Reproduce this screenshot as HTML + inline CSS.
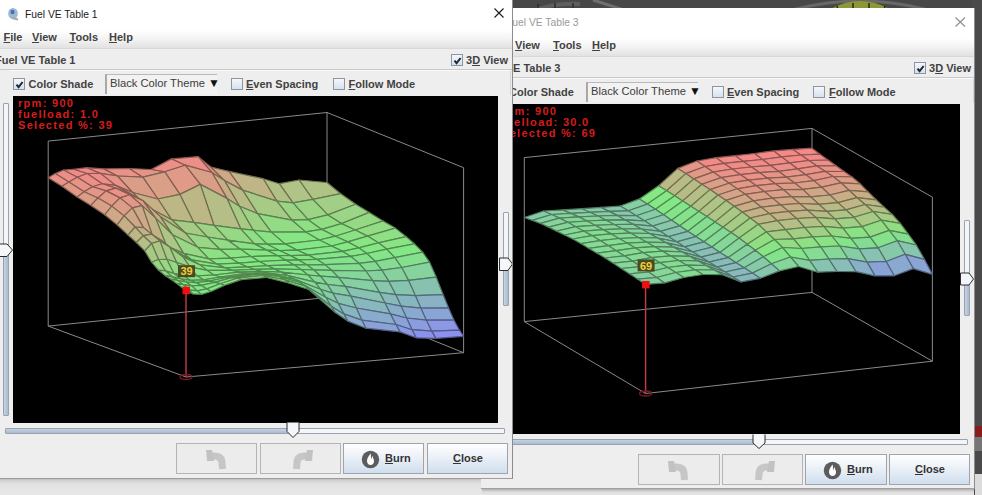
<!DOCTYPE html>
<html><head><meta charset="utf-8">
<style>
*{margin:0;padding:0;box-sizing:border-box}
html,body{width:982px;height:495px;overflow:hidden;background:#e6e6e6;font-family:"Liberation Sans",sans-serif}
.abs{position:absolute}
.win{position:absolute;background:#eeeeee;overflow:hidden}
.title{position:absolute;left:0;right:0;top:0;height:30px;background:#ffffff}
.menubar{position:absolute;left:0;right:0;top:30px;height:19px;background:linear-gradient(#ffffff 0%,#f6f6f6 40%,#e2e2e2 100%);border-bottom:1px solid #d8d8d8}
.mi{position:absolute;top:1px;font-size:11px;font-weight:700;color:#424242;white-space:nowrap}
.u{text-decoration:underline;text-underline-offset:1px}
.row{position:absolute;left:0;right:0;top:49px;height:21px;background:#eeeeee;border-bottom:1px solid #c9c9c9}
.lbl{position:absolute;font-size:11px;font-weight:700;color:#424242;white-space:nowrap}
.tb{position:absolute;top:70px;height:25px;background:#eeeeee;border-top:1px solid #fafafa;border-right:1px solid #d6d6d6}
.cb{position:absolute;width:12px;height:12px;border:1px solid #8a96a4;background:linear-gradient(#f4f7fb,#d7e1ec)}
.cb svg{position:absolute;left:1px;top:1px}
.combo{position:absolute;height:20px;border-left:2px solid #a8a8a8;border-top:1px solid #b9b9b9;background:#f2f2f2;font-size:11.2px;color:#3c3c3c;white-space:nowrap;padding-left:3px;line-height:17px}
.plot{position:absolute;background:#000;overflow:hidden}
.plot svg{position:absolute;left:0;top:0}
.txt{position:absolute;font-size:11px;font-weight:700;color:#d81c1c;letter-spacing:1.3px;line-height:11px;white-space:nowrap}
.vtrack{position:absolute;width:6px;border:1px solid #9aa3ad;background:#f3f5f8;border-radius:1px}
.vfill{position:absolute;left:0;right:0;bottom:0;background:linear-gradient(90deg,#c5d2e2,#a9bbd2)}
.htrack{position:absolute;height:6px;border:1px solid #9aa3ad;background:#f3f5f8;border-radius:1px}
.hfill{position:absolute;left:0;top:0;bottom:0;background:linear-gradient(#c5d2e2,#a9bbd2)}
.btn{position:absolute;border:1px solid #9ea4aa;background:linear-gradient(#fdfeff 0%,#f0f4f9 35%,#cfdeee 100%);font-size:11px;font-weight:700;color:#333;white-space:nowrap;text-align:center}
.btnd{position:absolute;border:1px solid #b4b4b4;background:#ececec}
</style></head><body>

<!-- background app -->
<div class="abs" style="left:480px;top:0;width:502px;height:12px;background:#474747"></div>
<div class="abs" style="left:972px;top:0;width:10px;height:495px;background:#4a4a4a"></div>
<div class="abs" style="left:975px;top:426px;width:7px;height:11px;background:#8a1c1c"></div>
<div class="abs" style="left:975px;top:437px;width:7px;height:14px;background:#767676"></div>
<div class="abs" style="left:975px;top:474px;width:7px;height:21px;background:#dcdcdc"></div>
<svg class="abs" style="left:480px;top:0" width="502" height="12">
  <path d="M305,12 Q380,-10 455,12" stroke="#686868" stroke-width="3" fill="none"/>
  <path d="M352,12 Q380,-3 408,12" stroke="#8e9636" stroke-width="7" fill="none"/>
  <path d="M357,6 L358,10 M373,3 L373,9 M389,3 L389,9 M405,6 L404,10" stroke="#2a2a10" stroke-width="1.5"/>
  <path d="M50,12 Q75,2 100,4" stroke="#5e5e5e" stroke-width="4" fill="none"/>
  <path d="M58,4 L58,11 M75,3 L75,10 M93,3 L93,10" stroke="#2e2e2e" stroke-width="1.5"/>
  <path d="M113,0 L147,11" stroke="#6e6e6e" stroke-width="3"/>
</svg>
<div class="abs" style="left:0;top:478px;width:482px;height:17px;background:linear-gradient(#a8a8a8 0px,#cfcfcf 2px,#e2e2e2 6px,#e8e8e8 100%)"></div>
<div class="abs" style="left:482px;top:489px;width:492px;height:6px;background:linear-gradient(#b0b0b0 0px,#dedede 3px,#e6e6e6 100%)"></div>

<!-- ============ WINDOW 2 ============ -->
<div class="win" style="left:481px;top:8px;width:494px;height:481px;border-right:1px solid #8c8c8c;border-bottom:1px solid #a0a0a0">
  <div class="title"><span class="abs" style="left:25px;top:9px;font-size:10.3px;color:#9a9a9a;white-space:nowrap">Fuel VE Table 3</span>
    <svg class="abs" style="left:474px;top:9px" width="11" height="10"><path d="M0.5,0.5 L10,9.5 M10,0.5 L0.5,9.5" stroke="#8e8e8e" stroke-width="1.1"/></svg>
  </div>
  <div class="menubar">
    <span class="mi" style="left:3px"><span class="u">F</span>ile</span>
    <span class="mi" style="left:34px"><span class="u">V</span>iew</span>
    <span class="mi" style="left:72px"><span class="u">T</span>ools</span>
    <span class="mi" style="left:111px"><span class="u">H</span>elp</span>
  </div>
  <div class="row">
    <span class="lbl" style="left:-1px;top:5px">Fuel VE Table 3</span>
    <div class="cb" style="left:433px;top:5px"><svg width="10" height="10"><path d="M1.5,4.6 L3.6,7.2 L7.6,2.0" stroke="#1c2838" stroke-width="2" fill="none"/></svg></div>
    <span class="lbl" style="left:448px;top:5px">3<span class="u">D</span> View</span>
  </div>
  <div class="tb" style="left:10px;width:483px">
    <div class="cb" style="left:2px;top:7px"><svg width="10" height="10"><path d="M1.5,4.6 L3.6,7.2 L7.6,2.0" stroke="#1c2838" stroke-width="2" fill="none"/></svg></div>
    <span class="lbl" style="left:18px;top:7px">Color Shade</span>
    <div class="combo" style="left:95px;top:3px;width:112px">Black Color Theme <span style="font-size:12px;color:#111;position:relative;top:0px">&#9660;</span></div>
    <div class="cb" style="left:221px;top:7px"></div>
    <span class="lbl" style="left:236px;top:7px"><span class="u">E</span>ven Spacing</span>
    <div class="cb" style="left:322px;top:7px"></div>
    <span class="lbl" style="left:338px;top:7px"><span class="u">F</span>ollow Mode</span>
  </div>
  <div class="plot" style="left:15px;top:96px;width:464px;height:330px">
    <svg width="464" height="330"><g transform="translate(-496,-104)"><line x1="524.3" y1="321.6" x2="524.3" y2="157.6" stroke="#8a8a8a" stroke-width="1"/>
<line x1="812.0" y1="292.4" x2="812.0" y2="128.4" stroke="#8a8a8a" stroke-width="1"/>
<line x1="932.4" y1="361.2" x2="932.4" y2="197.2" stroke="#8a8a8a" stroke-width="1"/>
<line x1="524.3" y1="157.6" x2="812.0" y2="128.4" stroke="#8a8a8a" stroke-width="1"/>
<line x1="812.0" y1="128.4" x2="932.4" y2="197.2" stroke="#8a8a8a" stroke-width="1"/>
<line x1="524.3" y1="321.6" x2="645.6" y2="393.5" stroke="#8a8a8a" stroke-width="1"/>
<line x1="645.6" y1="393.5" x2="932.4" y2="361.2" stroke="#8a8a8a" stroke-width="1"/>
<line x1="524.3" y1="321.6" x2="812.0" y2="292.4" stroke="#8a8a8a" stroke-width="1"/>
<line x1="812.0" y1="292.4" x2="932.4" y2="361.2" stroke="#8a8a8a" stroke-width="1"/><polygon points="800.9,155.0 820.0,154.2 812.0,148.2 792.8,149.4" fill="#f28a88" stroke="#915352" stroke-width="1.2" stroke-linejoin="round"/>
<polygon points="781.7,156.9 800.9,155.0 792.8,149.4 773.6,150.9" fill="#f28a88" stroke="#915352" stroke-width="1.2" stroke-linejoin="round"/>
<polygon points="762.5,159.5 781.7,156.9 773.6,150.9 754.5,153.5" fill="#f28a88" stroke="#915352" stroke-width="1.2" stroke-linejoin="round"/>
<polygon points="808.9,160.5 828.1,160.0 820.0,154.2 800.9,155.0" fill="#ef8c88" stroke="#905452" stroke-width="1.2" stroke-linejoin="round"/>
<polygon points="743.3,161.4 762.5,159.5 754.5,153.5 735.3,155.7" fill="#f28a88" stroke="#915352" stroke-width="1.2" stroke-linejoin="round"/>
<polygon points="789.7,162.9 808.9,160.5 800.9,155.0 781.7,156.9" fill="#f28a88" stroke="#915352" stroke-width="1.2" stroke-linejoin="round"/>
<polygon points="724.1,163.4 743.3,161.4 735.3,155.7 716.1,157.7" fill="#f28a88" stroke="#915352" stroke-width="1.2" stroke-linejoin="round"/>
<polygon points="770.5,165.4 789.7,162.9 781.7,156.9 762.5,159.5" fill="#f08c88" stroke="#905452" stroke-width="1.2" stroke-linejoin="round"/>
<polygon points="816.9,165.9 836.1,165.8 828.1,160.0 808.9,160.5" fill="#eb9088" stroke="#8d5651" stroke-width="1.2" stroke-linejoin="round"/>
<polygon points="705.0,166.5 724.1,163.4 716.1,157.7 696.9,161.0" fill="#f18b88" stroke="#915352" stroke-width="1.2" stroke-linejoin="round"/>
<polygon points="751.4,167.0 770.5,165.4 762.5,159.5 743.3,161.4" fill="#ef8c88" stroke="#905452" stroke-width="1.2" stroke-linejoin="round"/>
<polygon points="797.7,168.9 816.9,165.9 808.9,160.5 789.7,162.9" fill="#ed8e88" stroke="#8e5551" stroke-width="1.2" stroke-linejoin="round"/>
<polygon points="685.8,173.6 705.0,166.5 696.9,161.0 677.7,168.4" fill="#e49687" stroke="#895a51" stroke-width="1.2" stroke-linejoin="round"/>
<polygon points="732.2,169.0 751.4,167.0 743.3,161.4 724.1,163.4" fill="#f08c88" stroke="#905452" stroke-width="1.2" stroke-linejoin="round"/>
<polygon points="778.6,171.3 797.7,168.9 789.7,162.9 770.5,165.4" fill="#eb9088" stroke="#8d5751" stroke-width="1.2" stroke-linejoin="round"/>
<polygon points="824.9,171.3 844.1,171.5 836.1,165.8 816.9,165.9" fill="#e79388" stroke="#8b5851" stroke-width="1.2" stroke-linejoin="round"/>
<polygon points="666.6,190.8 685.8,173.6 677.7,168.4 658.6,185.8" fill="#bbb986" stroke="#706f50" stroke-width="1.2" stroke-linejoin="round"/>
<polygon points="713.0,172.1 732.2,169.0 724.1,163.4 705.0,166.5" fill="#ed8e88" stroke="#8e5552" stroke-width="1.2" stroke-linejoin="round"/>
<polygon points="759.4,172.6 778.6,171.3 770.5,165.4 751.4,167.0" fill="#eb9088" stroke="#8d5651" stroke-width="1.2" stroke-linejoin="round"/>
<polygon points="805.8,174.7 824.9,171.3 816.9,165.9 797.7,168.9" fill="#e99288" stroke="#8c5751" stroke-width="1.2" stroke-linejoin="round"/>
<polygon points="647.4,204.1 666.6,190.8 658.6,185.8 639.4,198.9" fill="#86e784" stroke="#508a4f" stroke-width="1.2" stroke-linejoin="round"/>
<polygon points="693.8,178.9 713.0,172.1 705.0,166.5 685.8,173.6" fill="#e19887" stroke="#875b51" stroke-width="1.2" stroke-linejoin="round"/>
<polygon points="740.2,174.6 759.4,172.6 751.4,167.0 732.2,169.0" fill="#ec8f88" stroke="#8e5651" stroke-width="1.2" stroke-linejoin="round"/>
<polygon points="786.6,177.2 805.8,174.7 797.7,168.9 778.6,171.3" fill="#e69588" stroke="#8a5951" stroke-width="1.2" stroke-linejoin="round"/>
<polygon points="833.0,176.5 852.1,177.0 844.1,171.5 824.9,171.3" fill="#e49687" stroke="#895a51" stroke-width="1.2" stroke-linejoin="round"/>
<polygon points="628.3,210.8 647.4,204.1 639.4,198.9 620.2,206.0" fill="#86cea3" stroke="#517c62" stroke-width="1.2" stroke-linejoin="round"/>
<polygon points="674.7,195.8 693.8,178.9 685.8,173.6 666.6,190.8" fill="#b9bb86" stroke="#6f7050" stroke-width="1.2" stroke-linejoin="round"/>
<polygon points="721.1,177.6 740.2,174.6 732.2,169.0 713.0,172.1" fill="#ea9188" stroke="#8c5751" stroke-width="1.2" stroke-linejoin="round"/>
<polygon points="767.5,178.2 786.6,177.2 778.6,171.3 759.4,172.6" fill="#e69488" stroke="#8a5951" stroke-width="1.2" stroke-linejoin="round"/>
<polygon points="813.8,180.6 833.0,176.5 824.9,171.3 805.8,174.7" fill="#e59588" stroke="#895951" stroke-width="1.2" stroke-linejoin="round"/>
<polygon points="609.1,211.4 628.3,210.8 620.2,206.0 601.0,207.4" fill="#87c7ab" stroke="#517867" stroke-width="1.2" stroke-linejoin="round"/>
<polygon points="655.5,209.3 674.7,195.8 666.6,190.8 647.4,204.1" fill="#84e884" stroke="#4f8b4f" stroke-width="1.2" stroke-linejoin="round"/>
<polygon points="701.9,184.3 721.1,177.6 713.0,172.1 693.8,178.9" fill="#de9b87" stroke="#855d51" stroke-width="1.2" stroke-linejoin="round"/>
<polygon points="748.3,180.1 767.5,178.2 759.4,172.6 740.2,174.6" fill="#e89288" stroke="#8b5851" stroke-width="1.2" stroke-linejoin="round"/>
<polygon points="794.7,183.0 813.8,180.6 805.8,174.7 786.6,177.2" fill="#e19987" stroke="#875c51" stroke-width="1.2" stroke-linejoin="round"/>
<polygon points="841.0,182.8 860.2,183.8 852.1,177.0 833.0,176.5" fill="#de9b87" stroke="#855d51" stroke-width="1.2" stroke-linejoin="round"/>
<polygon points="589.9,212.3 609.1,211.4 601.0,207.4 581.8,208.7" fill="#87caa7" stroke="#517964" stroke-width="1.2" stroke-linejoin="round"/>
<polygon points="636.3,215.7 655.5,209.3 647.4,204.1 628.3,210.8" fill="#86cda4" stroke="#517b63" stroke-width="1.2" stroke-linejoin="round"/>
<polygon points="682.7,200.9 701.9,184.3 693.8,178.9 674.7,195.8" fill="#b7bc86" stroke="#6e7150" stroke-width="1.2" stroke-linejoin="round"/>
<polygon points="729.1,183.2 748.3,180.1 740.2,174.6 721.1,177.6" fill="#e69488" stroke="#8a5951" stroke-width="1.2" stroke-linejoin="round"/>
<polygon points="775.5,183.7 794.7,183.0 786.6,177.2 767.5,178.2" fill="#e29887" stroke="#885b51" stroke-width="1.2" stroke-linejoin="round"/>
<polygon points="821.8,187.2 841.0,182.8 833.0,176.5 813.8,180.6" fill="#df9a87" stroke="#865c51" stroke-width="1.2" stroke-linejoin="round"/>
<polygon points="570.7,213.4 589.9,212.3 581.8,208.7 562.7,209.9" fill="#86cda4" stroke="#517b62" stroke-width="1.2" stroke-linejoin="round"/>
<polygon points="617.2,215.4 636.3,215.7 628.3,210.8 609.1,211.4" fill="#87c8aa" stroke="#517866" stroke-width="1.2" stroke-linejoin="round"/>
<polygon points="663.6,214.8 682.7,200.9 674.7,195.8 655.5,209.3" fill="#84e686" stroke="#4f8a50" stroke-width="1.2" stroke-linejoin="round"/>
<polygon points="710.0,189.6 729.1,183.2 721.1,177.6 701.9,184.3" fill="#db9e87" stroke="#835f51" stroke-width="1.2" stroke-linejoin="round"/>
<polygon points="756.3,185.7 775.5,183.7 767.5,178.2 748.3,180.1" fill="#e59688" stroke="#895a51" stroke-width="1.2" stroke-linejoin="round"/>
<polygon points="802.7,189.4 821.8,187.2 813.8,180.6 794.7,183.0" fill="#db9e87" stroke="#835f51" stroke-width="1.2" stroke-linejoin="round"/>
<polygon points="849.0,190.3 868.2,191.9 860.2,183.8 841.0,182.8" fill="#d4a487" stroke="#7f6251" stroke-width="1.2" stroke-linejoin="round"/>
<polygon points="551.6,214.5 570.7,213.4 562.7,209.9 543.5,211.0" fill="#86d0a1" stroke="#507d60" stroke-width="1.2" stroke-linejoin="round"/>
<polygon points="598.0,216.0 617.2,215.4 609.1,211.4 589.9,212.3" fill="#86cda4" stroke="#517b62" stroke-width="1.2" stroke-linejoin="round"/>
<polygon points="644.4,220.8 663.6,214.8 655.5,209.3 636.3,215.7" fill="#86cca6" stroke="#517a64" stroke-width="1.2" stroke-linejoin="round"/>
<polygon points="690.8,206.2 710.0,189.6 701.9,184.3 682.7,200.9" fill="#b5be86" stroke="#6c7250" stroke-width="1.2" stroke-linejoin="round"/>
<polygon points="737.2,188.8 756.3,185.7 748.3,180.1 729.1,183.2" fill="#e39787" stroke="#885b51" stroke-width="1.2" stroke-linejoin="round"/>
<polygon points="783.5,189.7 802.7,189.4 794.7,183.0 775.5,183.7" fill="#dd9c87" stroke="#855e51" stroke-width="1.2" stroke-linejoin="round"/>
<polygon points="829.9,195.0 849.0,190.3 841.0,182.8 821.8,187.2" fill="#d6a287" stroke="#806151" stroke-width="1.2" stroke-linejoin="round"/>
<polygon points="532.4,220.4 551.6,214.5 543.5,211.0 524.3,217.5" fill="#87caa7" stroke="#517964" stroke-width="1.2" stroke-linejoin="round"/>
<polygon points="578.8,216.9 598.0,216.0 589.9,212.3 570.7,213.4" fill="#86d19f" stroke="#507e60" stroke-width="1.2" stroke-linejoin="round"/>
<polygon points="625.2,219.9 644.4,220.8 636.3,215.7 617.2,215.4" fill="#87c9a9" stroke="#517866" stroke-width="1.2" stroke-linejoin="round"/>
<polygon points="671.6,220.3 690.8,206.2 682.7,200.9 663.6,214.8" fill="#84e489" stroke="#4f8952" stroke-width="1.2" stroke-linejoin="round"/>
<polygon points="718.0,195.0 737.2,188.8 729.1,183.2 710.0,189.6" fill="#d8a087" stroke="#816051" stroke-width="1.2" stroke-linejoin="round"/>
<polygon points="764.4,191.5 783.5,189.7 775.5,183.7 756.3,185.7" fill="#e09987" stroke="#875c51" stroke-width="1.2" stroke-linejoin="round"/>
<polygon points="810.7,196.9 829.9,195.0 821.8,187.2 802.7,189.4" fill="#d1a687" stroke="#7d6451" stroke-width="1.2" stroke-linejoin="round"/>
<polygon points="857.1,197.7 876.2,199.8 868.2,191.9 849.0,190.3" fill="#c7ae86" stroke="#786951" stroke-width="1.2" stroke-linejoin="round"/>
<polygon points="559.6,218.1 578.8,216.9 570.7,213.4 551.6,214.5" fill="#86d49c" stroke="#507f5d" stroke-width="1.2" stroke-linejoin="round"/>
<polygon points="606.1,220.2 625.2,219.9 617.2,215.4 598.0,216.0" fill="#86d0a1" stroke="#507d61" stroke-width="1.2" stroke-linejoin="round"/>
<polygon points="652.5,226.1 671.6,220.3 663.6,214.8 644.4,220.8" fill="#87c9a9" stroke="#517965" stroke-width="1.2" stroke-linejoin="round"/>
<polygon points="698.9,211.4 718.0,195.0 710.0,189.6 690.8,206.2" fill="#b2c186" stroke="#6b7450" stroke-width="1.2" stroke-linejoin="round"/>
<polygon points="745.2,194.3 764.4,191.5 756.3,185.7 737.2,188.8" fill="#df9a87" stroke="#865d51" stroke-width="1.2" stroke-linejoin="round"/>
<polygon points="791.6,196.6 810.7,196.9 802.7,189.4 783.5,189.7" fill="#d5a387" stroke="#806251" stroke-width="1.2" stroke-linejoin="round"/>
<polygon points="837.9,202.6 857.1,197.7 849.0,190.3 829.9,195.0" fill="#caac87" stroke="#796751" stroke-width="1.2" stroke-linejoin="round"/>
<polygon points="540.5,223.4 559.6,218.1 551.6,214.5 532.4,220.4" fill="#86d0a1" stroke="#507d61" stroke-width="1.2" stroke-linejoin="round"/>
<polygon points="586.9,221.0 606.1,220.2 598.0,216.0 578.8,216.9" fill="#86d49c" stroke="#507f5d" stroke-width="1.2" stroke-linejoin="round"/>
<polygon points="633.3,224.4 652.5,226.1 644.4,220.8 625.2,219.9" fill="#87c8aa" stroke="#517866" stroke-width="1.2" stroke-linejoin="round"/>
<polygon points="679.7,225.8 698.9,211.4 690.8,206.2 671.6,220.3" fill="#85e28b" stroke="#508854" stroke-width="1.2" stroke-linejoin="round"/>
<polygon points="726.1,200.4 745.2,194.3 737.2,188.8 718.0,195.0" fill="#d5a387" stroke="#806251" stroke-width="1.2" stroke-linejoin="round"/>
<polygon points="772.4,198.1 791.6,196.6 783.5,189.7 764.4,191.5" fill="#da9f87" stroke="#835f51" stroke-width="1.2" stroke-linejoin="round"/>
<polygon points="818.8,204.3 837.9,202.6 829.9,195.0 810.7,196.9" fill="#c5b186" stroke="#766a51" stroke-width="1.2" stroke-linejoin="round"/>
<polygon points="865.1,204.5 884.2,207.1 876.2,199.8 857.1,197.7" fill="#bcb886" stroke="#716e50" stroke-width="1.2" stroke-linejoin="round"/>
<polygon points="567.7,222.3 586.9,221.0 578.8,216.9 559.6,218.1" fill="#85d798" stroke="#50815b" stroke-width="1.2" stroke-linejoin="round"/>
<polygon points="614.1,224.5 633.3,224.4 625.2,219.9 606.1,220.2" fill="#86d19f" stroke="#507d60" stroke-width="1.2" stroke-linejoin="round"/>
<polygon points="660.5,231.4 679.7,225.8 671.6,220.3 652.5,226.1" fill="#87c7ab" stroke="#517767" stroke-width="1.2" stroke-linejoin="round"/>
<polygon points="706.9,216.6 726.1,200.4 718.0,195.0 698.9,211.4" fill="#b0c386" stroke="#697550" stroke-width="1.2" stroke-linejoin="round"/>
<polygon points="753.3,200.8 772.4,198.1 764.4,191.5 745.2,194.3" fill="#d99f87" stroke="#826051" stroke-width="1.2" stroke-linejoin="round"/>
<polygon points="799.6,203.5 818.8,204.3 810.7,196.9 791.6,196.6" fill="#caac87" stroke="#796751" stroke-width="1.2" stroke-linejoin="round"/>
<polygon points="846.0,209.9 865.1,204.5 857.1,197.7 837.9,202.6" fill="#bfb586" stroke="#736d50" stroke-width="1.2" stroke-linejoin="round"/>
<polygon points="548.6,227.1 567.7,222.3 559.6,218.1 540.5,223.4" fill="#86d39d" stroke="#507f5e" stroke-width="1.2" stroke-linejoin="round"/>
<polygon points="595.0,225.3 614.1,224.5 606.1,220.2 586.9,221.0" fill="#86d69a" stroke="#50805c" stroke-width="1.2" stroke-linejoin="round"/>
<polygon points="641.4,229.0 660.5,231.4 652.5,226.1 633.3,224.4" fill="#87c8ab" stroke="#517866" stroke-width="1.2" stroke-linejoin="round"/>
<polygon points="687.8,231.3 706.9,216.6 698.9,211.4 679.7,225.8" fill="#85e08e" stroke="#508655" stroke-width="1.2" stroke-linejoin="round"/>
<polygon points="734.1,206.3 753.3,200.8 745.2,194.3 726.1,200.4" fill="#d0a787" stroke="#7d6451" stroke-width="1.2" stroke-linejoin="round"/>
<polygon points="780.5,204.8 799.6,203.5 791.6,196.6 772.4,198.1" fill="#d1a687" stroke="#7d6451" stroke-width="1.2" stroke-linejoin="round"/>
<polygon points="826.8,211.4 846.0,209.9 837.9,202.6 818.8,204.3" fill="#baba86" stroke="#707050" stroke-width="1.2" stroke-linejoin="round"/>
<polygon points="873.1,211.5 892.3,214.4 884.2,207.1 865.1,204.5" fill="#b2c086" stroke="#6b7350" stroke-width="1.2" stroke-linejoin="round"/>
<polygon points="575.8,226.7 595.0,225.3 586.9,221.0 567.7,222.3" fill="#85d996" stroke="#50825a" stroke-width="1.2" stroke-linejoin="round"/>
<polygon points="622.2,228.8 641.4,229.0 633.3,224.4 614.1,224.5" fill="#86d29e" stroke="#507e5f" stroke-width="1.2" stroke-linejoin="round"/>
<polygon points="668.6,236.7 687.8,231.3 679.7,225.8 660.5,231.4" fill="#87c5ae" stroke="#517668" stroke-width="1.2" stroke-linejoin="round"/>
<polygon points="715.0,221.9 734.1,206.3 726.1,200.4 706.9,216.6" fill="#adc585" stroke="#687650" stroke-width="1.2" stroke-linejoin="round"/>
<polygon points="761.3,207.2 780.5,204.8 772.4,198.1 753.3,200.8" fill="#d1a687" stroke="#7e6451" stroke-width="1.2" stroke-linejoin="round"/>
<polygon points="807.7,210.2 826.8,211.4 818.8,204.3 799.6,203.5" fill="#c1b486" stroke="#746c51" stroke-width="1.2" stroke-linejoin="round"/>
<polygon points="854.0,217.3 873.1,211.5 865.1,204.5 846.0,209.9" fill="#b5be86" stroke="#6d7250" stroke-width="1.2" stroke-linejoin="round"/>
<polygon points="556.6,231.1 575.8,226.7 567.7,222.3 548.6,227.1" fill="#86d69a" stroke="#50805c" stroke-width="1.2" stroke-linejoin="round"/>
<polygon points="603.1,229.6 622.2,228.8 614.1,224.5 595.0,225.3" fill="#85d798" stroke="#50815b" stroke-width="1.2" stroke-linejoin="round"/>
<polygon points="649.4,233.5 668.6,236.7 660.5,231.4 641.4,229.0" fill="#87c7ab" stroke="#517867" stroke-width="1.2" stroke-linejoin="round"/>
<polygon points="695.8,236.6 715.0,221.9 706.9,216.6 687.8,231.3" fill="#85de90" stroke="#508557" stroke-width="1.2" stroke-linejoin="round"/>
<polygon points="742.2,212.1 761.3,207.2 753.3,200.8 734.1,206.3" fill="#caac87" stroke="#796751" stroke-width="1.2" stroke-linejoin="round"/>
<polygon points="788.5,211.4 807.7,210.2 799.6,203.5 780.5,204.8" fill="#c9ad86" stroke="#786851" stroke-width="1.2" stroke-linejoin="round"/>
<polygon points="834.8,218.9 854.0,217.3 846.0,209.9 826.8,211.4" fill="#afc386" stroke="#697550" stroke-width="1.2" stroke-linejoin="round"/>
<polygon points="881.2,220.2 900.3,223.4 892.3,214.4 873.1,211.5" fill="#a5cc85" stroke="#637a50" stroke-width="1.2" stroke-linejoin="round"/>
<polygon points="583.9,231.2 603.1,229.6 595.0,225.3 575.8,226.7" fill="#85da94" stroke="#508359" stroke-width="1.2" stroke-linejoin="round"/>
<polygon points="630.3,233.1 649.4,233.5 641.4,229.0 622.2,228.8" fill="#86d39d" stroke="#507f5e" stroke-width="1.2" stroke-linejoin="round"/>
<polygon points="676.7,241.8 695.8,236.6 687.8,231.3 668.6,236.7" fill="#87c3b0" stroke="#51756a" stroke-width="1.2" stroke-linejoin="round"/>
<polygon points="723.0,227.2 742.2,212.1 734.1,206.3 715.0,221.9" fill="#a9c885" stroke="#657850" stroke-width="1.2" stroke-linejoin="round"/>
<polygon points="769.4,213.6 788.5,211.4 780.5,204.8 761.3,207.2" fill="#caac87" stroke="#796751" stroke-width="1.2" stroke-linejoin="round"/>
<polygon points="815.7,217.4 834.8,218.9 826.8,211.4 807.7,210.2" fill="#b7bc86" stroke="#6e7150" stroke-width="1.2" stroke-linejoin="round"/>
<polygon points="862.0,226.6 881.2,220.2 873.1,211.5 854.0,217.3" fill="#a7ca85" stroke="#647950" stroke-width="1.2" stroke-linejoin="round"/>
<polygon points="564.7,235.0 583.9,231.2 575.8,226.7 556.6,231.1" fill="#85d898" stroke="#50815b" stroke-width="1.2" stroke-linejoin="round"/>
<polygon points="611.1,233.9 630.3,233.1 622.2,228.8 603.1,229.6" fill="#85d996" stroke="#50825a" stroke-width="1.2" stroke-linejoin="round"/>
<polygon points="657.5,238.0 676.7,241.8 668.6,236.7 649.4,233.5" fill="#87c7ac" stroke="#517767" stroke-width="1.2" stroke-linejoin="round"/>
<polygon points="703.9,241.8 723.0,227.2 715.0,221.9 695.8,236.6" fill="#85dc93" stroke="#508458" stroke-width="1.2" stroke-linejoin="round"/>
<polygon points="750.2,218.0 769.4,213.6 761.3,207.2 742.2,212.1" fill="#c4b186" stroke="#766a51" stroke-width="1.2" stroke-linejoin="round"/>
<polygon points="796.6,218.5 815.7,217.4 807.7,210.2 788.5,211.4" fill="#c0b586" stroke="#736d51" stroke-width="1.2" stroke-linejoin="round"/>
<polygon points="842.9,228.1 862.0,226.6 854.0,217.3 834.8,218.9" fill="#a0d085" stroke="#607d50" stroke-width="1.2" stroke-linejoin="round"/>
<polygon points="889.2,230.4 908.3,234.2 900.3,223.4 881.2,220.2" fill="#90dd84" stroke="#57854f" stroke-width="1.2" stroke-linejoin="round"/>
<polygon points="592.0,235.6 611.1,233.9 603.1,229.6 583.9,231.2" fill="#85dc93" stroke="#508458" stroke-width="1.2" stroke-linejoin="round"/>
<polygon points="638.4,237.6 657.5,238.0 649.4,233.5 630.3,233.1" fill="#86d49c" stroke="#507f5e" stroke-width="1.2" stroke-linejoin="round"/>
<polygon points="684.7,246.9 703.9,241.8 695.8,236.6 676.7,241.8" fill="#87c1b2" stroke="#51746b" stroke-width="1.2" stroke-linejoin="round"/>
<polygon points="731.1,232.5 750.2,218.0 742.2,212.1 723.0,227.2" fill="#a6cb85" stroke="#637a50" stroke-width="1.2" stroke-linejoin="round"/>
<polygon points="777.4,220.7 796.6,218.5 788.5,211.4 769.4,213.6" fill="#c1b386" stroke="#746c51" stroke-width="1.2" stroke-linejoin="round"/>
<polygon points="823.7,226.4 842.9,228.1 834.8,218.9 815.7,217.4" fill="#a9c985" stroke="#657850" stroke-width="1.2" stroke-linejoin="round"/>
<polygon points="870.1,237.1 889.2,230.4 881.2,220.2 862.0,226.6" fill="#93db85" stroke="#588450" stroke-width="1.2" stroke-linejoin="round"/>
<polygon points="572.8,239.0 592.0,235.6 583.9,231.2 564.7,235.0" fill="#85da95" stroke="#50835a" stroke-width="1.2" stroke-linejoin="round"/>
<polygon points="619.2,238.5 638.4,237.6 630.3,233.1 611.1,233.9" fill="#85da95" stroke="#508359" stroke-width="1.2" stroke-linejoin="round"/>
<polygon points="665.6,242.6 684.7,246.9 676.7,241.8 657.5,238.0" fill="#87c6ac" stroke="#517767" stroke-width="1.2" stroke-linejoin="round"/>
<polygon points="711.9,247.1 731.1,232.5 723.0,227.2 703.9,241.8" fill="#85da95" stroke="#508359" stroke-width="1.2" stroke-linejoin="round"/>
<polygon points="758.3,224.3 777.4,220.7 769.4,213.6 750.2,218.0" fill="#bdb786" stroke="#726e50" stroke-width="1.2" stroke-linejoin="round"/>
<polygon points="804.6,227.5 823.7,226.4 815.7,217.4 796.6,218.5" fill="#b2c186" stroke="#6b7450" stroke-width="1.2" stroke-linejoin="round"/>
<polygon points="850.9,238.3 870.1,237.1 862.0,226.6 842.9,228.1" fill="#8be284" stroke="#54874f" stroke-width="1.2" stroke-linejoin="round"/>
<polygon points="897.2,240.7 916.3,245.0 908.3,234.2 889.2,230.4" fill="#85de8f" stroke="#508556" stroke-width="1.2" stroke-linejoin="round"/>
<polygon points="600.1,240.6 619.2,238.5 611.1,233.9 592.0,235.6" fill="#85dc92" stroke="#508458" stroke-width="1.2" stroke-linejoin="round"/>
<polygon points="646.4,242.1 665.6,242.6 657.5,238.0 638.4,237.6" fill="#86d59b" stroke="#50805d" stroke-width="1.2" stroke-linejoin="round"/>
<polygon points="692.8,252.0 711.9,247.1 703.9,241.8 684.7,246.9" fill="#87c0b4" stroke="#51736c" stroke-width="1.2" stroke-linejoin="round"/>
<polygon points="739.1,238.1 758.3,224.3 750.2,218.0 731.1,232.5" fill="#a1cf85" stroke="#617c50" stroke-width="1.2" stroke-linejoin="round"/>
<polygon points="785.5,229.7 804.6,227.5 796.6,218.5 777.4,220.7" fill="#b4bf86" stroke="#6c7350" stroke-width="1.2" stroke-linejoin="round"/>
<polygon points="831.8,236.0 850.9,238.3 842.9,228.1 823.7,226.4" fill="#95d985" stroke="#5a8250" stroke-width="1.2" stroke-linejoin="round"/>
<polygon points="878.1,247.8 897.2,240.7 889.2,230.4 870.1,237.1" fill="#85e18c" stroke="#508754" stroke-width="1.2" stroke-linejoin="round"/>
<polygon points="580.9,243.6 600.1,240.6 592.0,235.6 572.8,239.0" fill="#85db94" stroke="#508359" stroke-width="1.2" stroke-linejoin="round"/>
<polygon points="627.3,243.2 646.4,242.1 638.4,237.6 619.2,238.5" fill="#85db94" stroke="#508359" stroke-width="1.2" stroke-linejoin="round"/>
<polygon points="673.7,247.2 692.8,252.0 684.7,246.9 665.6,242.6" fill="#87c6ad" stroke="#517768" stroke-width="1.2" stroke-linejoin="round"/>
<polygon points="720.0,252.4 739.1,238.1 731.1,232.5 711.9,247.1" fill="#85d898" stroke="#50815b" stroke-width="1.2" stroke-linejoin="round"/>
<polygon points="766.3,231.9 785.5,229.7 777.4,220.7 758.3,224.3" fill="#b2c186" stroke="#6b7450" stroke-width="1.2" stroke-linejoin="round"/>
<polygon points="812.7,236.8 831.8,236.0 823.7,226.4 804.6,227.5" fill="#a0d085" stroke="#607d50" stroke-width="1.2" stroke-linejoin="round"/>
<polygon points="859.0,248.8 878.1,247.8 870.1,237.1 850.9,238.3" fill="#85db94" stroke="#508359" stroke-width="1.2" stroke-linejoin="round"/>
<polygon points="905.2,254.3 924.4,259.3 916.3,245.0 897.2,240.7" fill="#87c5ae" stroke="#517668" stroke-width="1.2" stroke-linejoin="round"/>
<polygon points="608.1,245.6 627.3,243.2 619.2,238.5 600.1,240.6" fill="#85dc92" stroke="#508458" stroke-width="1.2" stroke-linejoin="round"/>
<polygon points="654.5,246.7 673.7,247.2 665.6,242.6 646.4,242.1" fill="#86d59a" stroke="#50805d" stroke-width="1.2" stroke-linejoin="round"/>
<polygon points="700.9,257.1 720.0,252.4 711.9,247.1 692.8,252.0" fill="#88beb6" stroke="#51726d" stroke-width="1.2" stroke-linejoin="round"/>
<polygon points="747.2,244.2 766.3,231.9 758.3,224.3 739.1,238.1" fill="#9ad585" stroke="#5d8050" stroke-width="1.2" stroke-linejoin="round"/>
<polygon points="793.5,238.8 812.7,236.8 804.6,227.5 785.5,229.7" fill="#a2ce85" stroke="#617c50" stroke-width="1.2" stroke-linejoin="round"/>
<polygon points="839.8,246.0 859.0,248.8 850.9,238.3 831.8,236.0" fill="#84e489" stroke="#4f8952" stroke-width="1.2" stroke-linejoin="round"/>
<polygon points="886.1,261.5 905.2,254.3 897.2,240.7 878.1,247.8" fill="#87c8aa" stroke="#517866" stroke-width="1.2" stroke-linejoin="round"/>
<polygon points="589.0,248.4 608.1,245.6 600.1,240.6 580.9,243.6" fill="#85da94" stroke="#508359" stroke-width="1.2" stroke-linejoin="round"/>
<polygon points="635.4,247.9 654.5,246.7 646.4,242.1 627.3,243.2" fill="#85db93" stroke="#508358" stroke-width="1.2" stroke-linejoin="round"/>
<polygon points="681.7,251.8 700.9,257.1 692.8,252.0 673.7,247.2" fill="#87c6ad" stroke="#517768" stroke-width="1.2" stroke-linejoin="round"/>
<polygon points="728.1,257.6 747.2,244.2 739.1,238.1 720.0,252.4" fill="#86d59b" stroke="#50805d" stroke-width="1.2" stroke-linejoin="round"/>
<polygon points="774.4,239.5 793.5,238.8 785.5,229.7 766.3,231.9" fill="#a3cd85" stroke="#627b50" stroke-width="1.2" stroke-linejoin="round"/>
<polygon points="820.7,246.8 839.8,246.0 831.8,236.0 812.7,236.8" fill="#8be284" stroke="#54874f" stroke-width="1.2" stroke-linejoin="round"/>
<polygon points="867.0,262.1 886.1,261.5 878.1,247.8 859.0,248.8" fill="#87c2b2" stroke="#51746b" stroke-width="1.2" stroke-linejoin="round"/>
<polygon points="913.3,268.6 932.4,274.4 924.4,259.3 905.2,254.3" fill="#8aa4d5" stroke="#536380" stroke-width="1.2" stroke-linejoin="round"/>
<polygon points="616.2,250.7 635.4,247.9 627.3,243.2 608.1,245.6" fill="#85dc93" stroke="#508458" stroke-width="1.2" stroke-linejoin="round"/>
<polygon points="662.6,251.2 681.7,251.8 673.7,247.2 654.5,246.7" fill="#86d69a" stroke="#50805c" stroke-width="1.2" stroke-linejoin="round"/>
<polygon points="708.9,262.1 728.1,257.6 720.0,252.4 700.9,257.1" fill="#88bdb8" stroke="#51716e" stroke-width="1.2" stroke-linejoin="round"/>
<polygon points="755.3,250.3 774.4,239.5 766.3,231.9 747.2,244.2" fill="#92dc84" stroke="#57844f" stroke-width="1.2" stroke-linejoin="round"/>
<polygon points="801.6,248.5 820.7,246.8 812.7,236.8 793.5,238.8" fill="#8fdf84" stroke="#56864f" stroke-width="1.2" stroke-linejoin="round"/>
<polygon points="847.9,258.7 867.0,262.1 859.0,248.8 839.8,246.0" fill="#86cda5" stroke="#517b63" stroke-width="1.2" stroke-linejoin="round"/>
<polygon points="894.2,275.8 913.3,268.6 905.2,254.3 886.1,261.5" fill="#8aa9d0" stroke="#53657d" stroke-width="1.2" stroke-linejoin="round"/>
<polygon points="597.1,253.2 616.2,250.7 608.1,245.6 589.0,248.4" fill="#85da95" stroke="#508359" stroke-width="1.2" stroke-linejoin="round"/>
<polygon points="643.4,252.7 662.6,251.2 654.5,246.7 635.4,247.9" fill="#85dc93" stroke="#508458" stroke-width="1.2" stroke-linejoin="round"/>
<polygon points="689.8,256.4 708.9,262.1 700.9,257.1 681.7,251.8" fill="#87c5ad" stroke="#517668" stroke-width="1.2" stroke-linejoin="round"/>
<polygon points="736.1,262.7 755.3,250.3 747.2,244.2 728.1,257.6" fill="#86d29f" stroke="#507e5f" stroke-width="1.2" stroke-linejoin="round"/>
<polygon points="782.5,247.5 801.6,248.5 793.5,238.8 774.4,239.5" fill="#94db85" stroke="#598350" stroke-width="1.2" stroke-linejoin="round"/>
<polygon points="828.8,259.0 847.9,258.7 839.8,246.0 820.7,246.8" fill="#85d897" stroke="#50825b" stroke-width="1.2" stroke-linejoin="round"/>
<polygon points="875.0,275.9 894.2,275.8 886.1,261.5 867.0,262.1" fill="#8aa3d6" stroke="#536281" stroke-width="1.2" stroke-linejoin="round"/>
<polygon points="624.3,255.8 643.4,252.7 635.4,247.9 616.2,250.7" fill="#85db93" stroke="#508458" stroke-width="1.2" stroke-linejoin="round"/>
<polygon points="670.7,255.9 689.8,256.4 681.7,251.8 662.6,251.2" fill="#86d699" stroke="#50815c" stroke-width="1.2" stroke-linejoin="round"/>
<polygon points="717.0,267.1 736.1,262.7 728.1,257.6 708.9,262.1" fill="#88bcb9" stroke="#52716f" stroke-width="1.2" stroke-linejoin="round"/>
<polygon points="763.3,256.7 782.5,247.5 774.4,239.5 755.3,250.3" fill="#88e484" stroke="#52894f" stroke-width="1.2" stroke-linejoin="round"/>
<polygon points="809.6,260.4 828.8,259.0 820.7,246.8 801.6,248.5" fill="#85dc93" stroke="#508458" stroke-width="1.2" stroke-linejoin="round"/>
<polygon points="855.9,271.6 875.0,275.9 867.0,262.1 847.9,258.7" fill="#89b0c7" stroke="#526a77" stroke-width="1.2" stroke-linejoin="round"/>
<polygon points="605.2,258.0 624.3,255.8 616.2,250.7 597.1,253.2" fill="#85d995" stroke="#50825a" stroke-width="1.2" stroke-linejoin="round"/>
<polygon points="651.5,257.6 670.7,255.9 662.6,251.2 643.4,252.7" fill="#85dc93" stroke="#508458" stroke-width="1.2" stroke-linejoin="round"/>
<polygon points="697.9,260.9 717.0,267.1 708.9,262.1 689.8,256.4" fill="#87c5ae" stroke="#517668" stroke-width="1.2" stroke-linejoin="round"/>
<polygon points="744.2,267.8 763.3,256.7 755.3,250.3 736.1,262.7" fill="#86cea3" stroke="#517c62" stroke-width="1.2" stroke-linejoin="round"/>
<polygon points="790.5,257.0 809.6,260.4 801.6,248.5 782.5,247.5" fill="#84e489" stroke="#4f8952" stroke-width="1.2" stroke-linejoin="round"/>
<polygon points="836.8,271.4 855.9,271.6 847.9,258.7 828.8,259.0" fill="#88beb7" stroke="#51726e" stroke-width="1.2" stroke-linejoin="round"/>
<polygon points="632.4,261.1 651.5,257.6 643.4,252.7 624.3,255.8" fill="#85db94" stroke="#508359" stroke-width="1.2" stroke-linejoin="round"/>
<polygon points="678.7,260.5 697.9,260.9 689.8,256.4 670.7,255.9" fill="#85d798" stroke="#50815b" stroke-width="1.2" stroke-linejoin="round"/>
<polygon points="725.1,272.0 744.2,267.8 736.1,262.7 717.0,267.1" fill="#88bbba" stroke="#527070" stroke-width="1.2" stroke-linejoin="round"/>
<polygon points="771.4,263.8 790.5,257.0 782.5,247.5 763.3,256.7" fill="#85e28c" stroke="#508754" stroke-width="1.2" stroke-linejoin="round"/>
<polygon points="817.7,272.2 836.8,271.4 828.8,259.0 809.6,260.4" fill="#87c3b0" stroke="#51756a" stroke-width="1.2" stroke-linejoin="round"/>
<polygon points="613.3,263.2 632.4,261.1 624.3,255.8 605.2,258.0" fill="#85d897" stroke="#50825a" stroke-width="1.2" stroke-linejoin="round"/>
<polygon points="659.6,262.6 678.7,260.5 670.7,255.9 651.5,257.6" fill="#85dc93" stroke="#508458" stroke-width="1.2" stroke-linejoin="round"/>
<polygon points="705.9,265.5 725.1,272.0 717.0,267.1 697.9,260.9" fill="#87c5ae" stroke="#517668" stroke-width="1.2" stroke-linejoin="round"/>
<polygon points="752.3,273.1 771.4,263.8 763.3,256.7 744.2,267.8" fill="#87caa8" stroke="#517965" stroke-width="1.2" stroke-linejoin="round"/>
<polygon points="798.6,266.5 817.7,272.2 809.6,260.4 790.5,257.0" fill="#86d0a1" stroke="#507d60" stroke-width="1.2" stroke-linejoin="round"/>
<polygon points="640.5,266.6 659.6,262.6 651.5,257.6 632.4,261.1" fill="#85d996" stroke="#50825a" stroke-width="1.2" stroke-linejoin="round"/>
<polygon points="686.8,265.2 705.9,265.5 697.9,260.9 678.7,260.5" fill="#85d798" stroke="#50815b" stroke-width="1.2" stroke-linejoin="round"/>
<polygon points="733.1,277.0 752.3,273.1 744.2,267.8 725.1,272.0" fill="#88b9bc" stroke="#526f71" stroke-width="1.2" stroke-linejoin="round"/>
<polygon points="779.4,270.9 798.6,266.5 790.5,257.0 771.4,263.8" fill="#86d59a" stroke="#50805d" stroke-width="1.2" stroke-linejoin="round"/>
<polygon points="621.3,268.5 640.5,266.6 632.4,261.1 613.3,263.2" fill="#86d799" stroke="#50815c" stroke-width="1.2" stroke-linejoin="round"/>
<polygon points="667.7,267.5 686.8,265.2 678.7,260.5 659.6,262.6" fill="#85db93" stroke="#508458" stroke-width="1.2" stroke-linejoin="round"/>
<polygon points="714.0,270.0 733.1,277.0 725.1,272.0 705.9,265.5" fill="#87c5ae" stroke="#517668" stroke-width="1.2" stroke-linejoin="round"/>
<polygon points="760.3,278.3 779.4,270.9 771.4,263.8 752.3,273.1" fill="#87c5ae" stroke="#517668" stroke-width="1.2" stroke-linejoin="round"/>
<polygon points="648.6,272.0 667.7,267.5 659.6,262.6 640.5,266.6" fill="#85d897" stroke="#50815b" stroke-width="1.2" stroke-linejoin="round"/>
<polygon points="694.9,269.8 714.0,270.0 705.9,265.5 686.8,265.2" fill="#85d897" stroke="#50825b" stroke-width="1.2" stroke-linejoin="round"/>
<polygon points="741.2,281.9 760.3,278.3 752.3,273.1 733.1,277.0" fill="#88b8bd" stroke="#526e72" stroke-width="1.2" stroke-linejoin="round"/>
<polygon points="629.4,273.8 648.6,272.0 640.5,266.6 621.3,268.5" fill="#86d59b" stroke="#50805d" stroke-width="1.2" stroke-linejoin="round"/>
<polygon points="675.8,272.5 694.9,269.8 686.8,265.2 667.7,267.5" fill="#85db93" stroke="#508458" stroke-width="1.2" stroke-linejoin="round"/>
<polygon points="722.1,274.6 741.2,281.9 733.1,277.0 714.0,270.0" fill="#87c5ae" stroke="#517668" stroke-width="1.2" stroke-linejoin="round"/>
<polygon points="656.6,277.5 675.8,272.5 667.7,267.5 648.6,272.0" fill="#86d699" stroke="#50815c" stroke-width="1.2" stroke-linejoin="round"/>
<polygon points="703.0,274.5 722.1,274.6 714.0,270.0 694.9,269.8" fill="#85d897" stroke="#50825a" stroke-width="1.2" stroke-linejoin="round"/>
<polygon points="637.5,279.1 656.6,277.5 648.6,272.0 629.4,273.8" fill="#86d39e" stroke="#507e5f" stroke-width="1.2" stroke-linejoin="round"/>
<polygon points="683.8,277.5 703.0,274.5 694.9,269.8 675.8,272.5" fill="#85db93" stroke="#508358" stroke-width="1.2" stroke-linejoin="round"/>
<polygon points="664.7,282.9 683.8,277.5 675.8,272.5 656.6,277.5" fill="#86d59b" stroke="#50805d" stroke-width="1.2" stroke-linejoin="round"/>
<polygon points="645.6,284.4 664.7,282.9 656.6,277.5 637.5,279.1" fill="#86d1a0" stroke="#507d60" stroke-width="1.2" stroke-linejoin="round"/><line x1="645.6" y1="284.4" x2="645.6" y2="393.5" stroke="#c83a4a" stroke-width="1.4"/><ellipse cx="645.6" cy="393.5" rx="6" ry="2.5" stroke="#7a1828" fill="none" stroke-width="1.3"/><rect x="642.1" y="280.9" width="7.5" height="7.5" fill="#ee1010"/><rect x="637.6" y="259.4" width="17" height="12" fill="#4a4a20"/><text x="646.1" y="269.6" fill="#f0d040" font-family="Liberation Sans" font-weight="700" font-size="11" text-anchor="middle">69</text></g></svg>
    <div class="txt" style="left:5px;top:2px">rpm: 900<br>fuelload: 30.0<br>Selected %: 69</div>
  </div>
  <div class="vtrack" style="left:483px;top:212px;height:96px"><div class="vfill" style="height:30px"></div></div>
  <svg class="abs" style="left:479px;top:264px" width="15" height="15"><path d="M0.5,1 L9,1 L13.5,7 L9,13 L0.5,13 Z" fill="#f4f6f9" stroke="#2c2c2c" stroke-width="1"/></svg>
  <div class="htrack" style="left:6px;top:431px;height:6px;width:481px"><div class="hfill" style="width:272px"></div></div>
  <svg class="abs" style="left:271px;top:426px" width="15" height="16"><path d="M1,0.5 L1,9 L7,14.5 L13,9 L13,0.5" fill="#f4f6f9" stroke="#2c2c2c" stroke-width="1"/></svg>
  <div class="btnd" style="left:157px;top:446px;width:82px;height:31px"><svg class="abs" style="left:28px;top:4px" width="24" height="23"><path d="M2,8 L9,8 Q17,8 17,15 L17.5,21" stroke="#c6c6c6" stroke-width="7" fill="none"/><path d="M1,2 L7,2 L9,13 L2,13 Z" fill="#c2c2c2"/></svg></div>
  <div class="btnd" style="left:241px;top:446px;width:81px;height:31px"><svg class="abs" style="left:29px;top:4px" width="24" height="23"><path d="M22,8 L15,8 Q7,8 7,15 L6.5,21" stroke="#c6c6c6" stroke-width="7" fill="none"/><path d="M23,2 L17,2 L15,13 L22,13 Z" fill="#c2c2c2"/></svg></div>
  <div class="btn" style="left:324px;top:446px;width:82px;height:31px"><svg class="abs" style="left:17px;top:6px" width="19" height="19"><circle cx="9.5" cy="9.5" r="8.7" fill="#5c5c5c"/><path d="M9.5,3.5 C8,6 6,7.5 6,11 C6,13.5 7.8,15 9.5,15 C11.5,15 13,13.5 13,11 C13,8.8 11.5,8 11.8,6 C10.6,7 10.6,8.5 10.2,9.3 C9.6,7.8 10.4,5.5 9.5,3.5 Z" fill="#ffffff"/></svg><span class="abs" style="left:41px;top:8px"><span class="u">B</span>urn</span></div>
  <div class="btn" style="left:408px;top:446px;width:81px;height:31px"><span class="abs" style="left:25px;top:8px;width:32px;text-align:left"><span class="u">C</span>lose</span></div>
</div>

<!-- ============ WINDOW 1 ============ -->
<div class="win" style="left:-3px;top:0;width:516px;height:479px;border-right:1px solid #8c8c8c;border-bottom:1px solid #9c9c9c">
  <div class="title">
    <svg class="abs" style="left:10px;top:7px" width="14" height="14"><ellipse cx="6" cy="6.5" rx="4.8" ry="5.5" fill="#9ab8d8"/><ellipse cx="5.5" cy="5" rx="2" ry="2.3" fill="#4a6fa8"/><path d="M5,11 L11,12.5" stroke="#a8a8a8" stroke-width="2.2"/></svg>
    <span class="abs" style="left:28px;top:9px;font-size:10.3px;color:#1a1a1a;white-space:nowrap">Fuel VE Table 1</span>
    <svg class="abs" style="left:497px;top:8px" width="11" height="11"><path d="M0.5,0.5 L9.5,9.5 M9.5,0.5 L0.5,9.5" stroke="#1a1a1a" stroke-width="1.1"/></svg>
  </div>
  <div class="menubar">
    <span class="mi" style="left:6.5px"><span class="u">F</span>ile</span>
    <span class="mi" style="left:35px"><span class="u">V</span>iew</span>
    <span class="mi" style="left:72.5px"><span class="u">T</span>ools</span>
    <span class="mi" style="left:112px"><span class="u">H</span>elp</span>
  </div>
  <div class="row">
    <span class="lbl" style="left:-2px;top:5px">Fuel VE Table 1</span>
    <div class="cb" style="left:454px;top:5px"><svg width="10" height="10"><path d="M1.5,4.6 L3.6,7.2 L7.6,2.0" stroke="#1c2838" stroke-width="2" fill="none"/></svg></div>
    <span class="lbl" style="left:469px;top:5px">3<span class="u">D</span> View</span>
  </div>
  <div class="tb" style="left:13px;width:501px">
    <div class="cb" style="left:3px;top:7px"><svg width="10" height="10"><path d="M1.5,4.6 L3.6,7.2 L7.6,2.0" stroke="#1c2838" stroke-width="2" fill="none"/></svg></div>
    <span class="lbl" style="left:18.5px;top:7px">Color Shade</span>
    <div class="combo" style="left:95px;top:3px;width:112px">Black Color Theme <span style="font-size:12px;color:#111;position:relative;top:0px">&#9660;</span></div>
    <div class="cb" style="left:221px;top:7px"></div>
    <span class="lbl" style="left:236px;top:7px"><span class="u">E</span>ven Spacing</span>
    <div class="cb" style="left:323px;top:7px"></div>
    <span class="lbl" style="left:338.5px;top:7px"><span class="u">F</span>ollow Mode</span>
  </div>
  <div class="plot" style="left:16px;top:96px;width:485px;height:327px">
    <svg width="485" height="327"><g transform="translate(-13,-96)"><line x1="48.2" y1="326.1" x2="48.2" y2="141.1" stroke="#8a8a8a" stroke-width="1"/>
<line x1="327.0" y1="297.5" x2="327.0" y2="112.5" stroke="#8a8a8a" stroke-width="1"/>
<line x1="463.6" y1="352.7" x2="463.6" y2="167.7" stroke="#8a8a8a" stroke-width="1"/>
<line x1="48.2" y1="141.1" x2="327.0" y2="112.5" stroke="#8a8a8a" stroke-width="1"/>
<line x1="327.0" y1="112.5" x2="463.6" y2="167.7" stroke="#8a8a8a" stroke-width="1"/>
<line x1="48.2" y1="326.1" x2="186.0" y2="377.0" stroke="#8a8a8a" stroke-width="1"/>
<line x1="186.0" y1="377.0" x2="463.6" y2="352.7" stroke="#8a8a8a" stroke-width="1"/>
<line x1="48.2" y1="326.1" x2="327.0" y2="297.5" stroke="#8a8a8a" stroke-width="1"/>
<line x1="327.0" y1="297.5" x2="463.6" y2="352.7" stroke="#8a8a8a" stroke-width="1"/><polygon points="312.8,199.3 340.7,193.7 327.0,182.5 299.1,180.0" fill="#afc386" stroke="#697550" stroke-width="1.2" stroke-linejoin="round"/>
<polygon points="293.0,202.8 312.8,199.3 299.1,180.0 279.3,183.7" fill="#afc486" stroke="#697550" stroke-width="1.2" stroke-linejoin="round"/>
<polygon points="276.8,201.1 293.0,202.8 279.3,183.7 263.2,178.7" fill="#b1c186" stroke="#6a7450" stroke-width="1.2" stroke-linejoin="round"/>
<polygon points="327.8,214.9 355.7,204.3 340.7,193.7 312.8,199.3" fill="#a2cf85" stroke="#617c50" stroke-width="1.2" stroke-linejoin="round"/>
<polygon points="242.6,190.1 276.8,201.1 263.2,178.7 228.9,171.3" fill="#bfb586" stroke="#736d50" stroke-width="1.2" stroke-linejoin="round"/>
<polygon points="308.1,219.7 327.8,214.9 312.8,199.3 293.0,202.8" fill="#9cd485" stroke="#5d7f50" stroke-width="1.2" stroke-linejoin="round"/>
<polygon points="224.5,180.6 242.6,190.1 228.9,171.3 210.7,167.0" fill="#d0a787" stroke="#7d6451" stroke-width="1.2" stroke-linejoin="round"/>
<polygon points="291.9,220.2 308.1,219.7 293.0,202.8 276.8,201.1" fill="#9cd485" stroke="#5d7f50" stroke-width="1.2" stroke-linejoin="round"/>
<polygon points="211.9,172.5 224.5,180.6 210.7,167.0 198.2,156.6" fill="#e09a87" stroke="#865c51" stroke-width="1.2" stroke-linejoin="round"/>
<polygon points="341.5,223.6 369.3,212.4 355.7,204.3 327.8,214.9" fill="#9ad685" stroke="#5c8050" stroke-width="1.2" stroke-linejoin="round"/>
<polygon points="185.2,165.2 211.9,172.5 198.2,156.6 171.4,158.9" fill="#ec8f88" stroke="#8e5651" stroke-width="1.2" stroke-linejoin="round"/>
<polygon points="257.6,213.6 291.9,220.2 276.8,201.1 242.6,190.1" fill="#a7ca85" stroke="#647950" stroke-width="1.2" stroke-linejoin="round"/>
<polygon points="321.7,229.4 341.5,223.6 327.8,214.9 308.1,219.7" fill="#91dd84" stroke="#57854f" stroke-width="1.2" stroke-linejoin="round"/>
<polygon points="164.8,171.8 185.2,165.2 171.4,158.9 151.1,169.5" fill="#eb9088" stroke="#8d5651" stroke-width="1.2" stroke-linejoin="round"/>
<polygon points="239.5,206.3 257.6,213.6 242.6,190.1 224.5,180.6" fill="#b9bb86" stroke="#6f7050" stroke-width="1.2" stroke-linejoin="round"/>
<polygon points="305.6,231.9 321.7,229.4 308.1,219.7 291.9,220.2" fill="#8ee084" stroke="#55864f" stroke-width="1.2" stroke-linejoin="round"/>
<polygon points="227.0,198.4 239.5,206.3 224.5,180.6 211.9,172.5" fill="#c8ae86" stroke="#786851" stroke-width="1.2" stroke-linejoin="round"/>
<polygon points="142.8,177.2 164.8,171.8 151.1,169.5 129.1,168.5" fill="#e69488" stroke="#8a5951" stroke-width="1.2" stroke-linejoin="round"/>
<polygon points="355.2,230.0 383.0,220.9 369.3,212.4 341.5,223.6" fill="#96d985" stroke="#5a8250" stroke-width="1.2" stroke-linejoin="round"/>
<polygon points="200.3,184.4 227.0,198.4 211.9,172.5 185.2,165.2" fill="#da9e87" stroke="#835f51" stroke-width="1.2" stroke-linejoin="round"/>
<polygon points="271.3,232.1 305.6,231.9 291.9,220.2 257.6,213.6" fill="#93db85" stroke="#588350" stroke-width="1.2" stroke-linejoin="round"/>
<polygon points="117.4,176.0 142.8,177.2 129.1,168.5 103.7,168.9" fill="#e89288" stroke="#8b5851" stroke-width="1.2" stroke-linejoin="round"/>
<polygon points="335.4,236.2 355.2,230.0 341.5,223.6 321.7,229.4" fill="#8de184" stroke="#54874f" stroke-width="1.2" stroke-linejoin="round"/>
<polygon points="179.9,194.4 200.3,184.4 185.2,165.2 164.8,171.8" fill="#e09a87" stroke="#865c51" stroke-width="1.2" stroke-linejoin="round"/>
<polygon points="253.2,230.2 271.3,232.1 257.6,213.6 239.5,206.3" fill="#9dd285" stroke="#5e7e50" stroke-width="1.2" stroke-linejoin="round"/>
<polygon points="100.4,173.4 117.4,176.0 103.7,168.9 86.7,167.7" fill="#ee8e88" stroke="#8f5552" stroke-width="1.2" stroke-linejoin="round"/>
<polygon points="319.3,240.0 335.4,236.2 321.7,229.4 305.6,231.9" fill="#88e484" stroke="#52894f" stroke-width="1.2" stroke-linejoin="round"/>
<polygon points="240.7,228.8 253.2,230.2 239.5,206.3 227.0,198.4" fill="#a7ca85" stroke="#647950" stroke-width="1.2" stroke-linejoin="round"/>
<polygon points="87.1,173.5 100.4,173.4 86.7,167.7 73.3,169.3" fill="#f18b88" stroke="#905352" stroke-width="1.2" stroke-linejoin="round"/>
<polygon points="157.9,199.0 179.9,194.4 164.8,171.8 142.8,177.2" fill="#d9a087" stroke="#826051" stroke-width="1.2" stroke-linejoin="round"/>
<polygon points="367.5,236.1 395.3,228.1 383.0,220.9 355.2,230.0" fill="#93db85" stroke="#588450" stroke-width="1.2" stroke-linejoin="round"/>
<polygon points="77.3,177.3 87.1,173.5 73.3,169.3 63.5,170.0" fill="#f08c88" stroke="#905452" stroke-width="1.2" stroke-linejoin="round"/>
<polygon points="285.0,243.9 319.3,240.0 305.6,231.9 271.3,232.1" fill="#88e584" stroke="#52894f" stroke-width="1.2" stroke-linejoin="round"/>
<polygon points="214.0,225.3 240.7,228.8 227.0,198.4 200.3,184.4" fill="#b5be86" stroke="#6d7250" stroke-width="1.2" stroke-linejoin="round"/>
<polygon points="68.9,182.0 77.3,177.3 63.5,170.0 55.2,173.6" fill="#ed8f88" stroke="#8e5651" stroke-width="1.2" stroke-linejoin="round"/>
<polygon points="132.6,192.5 157.9,199.0 142.8,177.2 117.4,176.0" fill="#db9d87" stroke="#845e51" stroke-width="1.2" stroke-linejoin="round"/>
<polygon points="62.0,186.3 68.9,182.0 55.2,173.6 48.2,177.8" fill="#e79388" stroke="#8b5851" stroke-width="1.2" stroke-linejoin="round"/>
<polygon points="347.7,241.9 367.5,236.1 355.2,230.0 335.4,236.2" fill="#8be284" stroke="#53884f" stroke-width="1.2" stroke-linejoin="round"/>
<polygon points="193.7,222.3 214.0,225.3 200.3,184.4 179.9,194.4" fill="#bdb786" stroke="#716e50" stroke-width="1.2" stroke-linejoin="round"/>
<polygon points="267.0,244.2 285.0,243.9 271.3,232.1 253.2,230.2" fill="#8be284" stroke="#53884f" stroke-width="1.2" stroke-linejoin="round"/>
<polygon points="115.6,185.4 132.6,192.5 117.4,176.0 100.4,173.4" fill="#e69488" stroke="#8a5951" stroke-width="1.2" stroke-linejoin="round"/>
<polygon points="331.6,246.0 347.7,241.9 335.4,236.2 319.3,240.0" fill="#86e684" stroke="#508a4f" stroke-width="1.2" stroke-linejoin="round"/>
<polygon points="378.4,242.8 406.2,236.7 395.3,228.1 367.5,236.1" fill="#8fdf84" stroke="#56864f" stroke-width="1.2" stroke-linejoin="round"/>
<polygon points="254.4,243.9 267.0,244.2 253.2,230.2 240.7,228.8" fill="#8fdf84" stroke="#56864f" stroke-width="1.2" stroke-linejoin="round"/>
<polygon points="102.2,183.8 115.6,185.4 100.4,173.4 87.1,173.5" fill="#ed8f88" stroke="#8e5651" stroke-width="1.2" stroke-linejoin="round"/>
<polygon points="171.7,219.8 193.7,222.3 179.9,194.4 157.9,199.0" fill="#bcb886" stroke="#716e50" stroke-width="1.2" stroke-linejoin="round"/>
<polygon points="92.5,186.7 102.2,183.8 87.1,173.5 77.3,177.3" fill="#ec8f88" stroke="#8e5651" stroke-width="1.2" stroke-linejoin="round"/>
<polygon points="297.4,250.2 331.6,246.0 319.3,240.0 285.0,243.9" fill="#84e785" stroke="#4f8b50" stroke-width="1.2" stroke-linejoin="round"/>
<polygon points="227.7,240.2 254.4,243.9 240.7,228.8 214.0,225.3" fill="#95d985" stroke="#598250" stroke-width="1.2" stroke-linejoin="round"/>
<polygon points="358.7,247.8 378.4,242.8 367.5,236.1 347.7,241.9" fill="#89e484" stroke="#52894f" stroke-width="1.2" stroke-linejoin="round"/>
<polygon points="84.1,191.7 92.5,186.7 77.3,177.3 68.9,182.0" fill="#e79388" stroke="#8b5851" stroke-width="1.2" stroke-linejoin="round"/>
<polygon points="146.3,206.4 171.7,219.8 157.9,199.0 132.6,192.5" fill="#c7af86" stroke="#786951" stroke-width="1.2" stroke-linejoin="round"/>
<polygon points="77.1,196.9 84.1,191.7 68.9,182.0 62.0,186.3" fill="#e19987" stroke="#875c51" stroke-width="1.2" stroke-linejoin="round"/>
<polygon points="386.6,249.1 414.4,243.8 406.2,236.7 378.4,242.8" fill="#8ae384" stroke="#53884f" stroke-width="1.2" stroke-linejoin="round"/>
<polygon points="342.5,251.4 358.7,247.8 347.7,241.9 331.6,246.0" fill="#84e884" stroke="#4f8b4f" stroke-width="1.2" stroke-linejoin="round"/>
<polygon points="279.3,250.5 297.4,250.2 285.0,243.9 267.0,244.2" fill="#84e884" stroke="#4f8b4f" stroke-width="1.2" stroke-linejoin="round"/>
<polygon points="207.4,237.0 227.7,240.2 214.0,225.3 193.7,222.3" fill="#9ed285" stroke="#5f7e50" stroke-width="1.2" stroke-linejoin="round"/>
<polygon points="129.3,193.2 146.3,206.4 132.6,192.5 115.6,185.4" fill="#da9e87" stroke="#835f51" stroke-width="1.2" stroke-linejoin="round"/>
<polygon points="266.8,250.1 279.3,250.5 267.0,244.2 254.4,243.9" fill="#86e684" stroke="#508a4f" stroke-width="1.2" stroke-linejoin="round"/>
<polygon points="366.9,253.5 386.6,249.1 378.4,242.8 358.7,247.8" fill="#85e784" stroke="#508b4f" stroke-width="1.2" stroke-linejoin="round"/>
<polygon points="185.4,233.0 207.4,237.0 193.7,222.3 171.7,219.8" fill="#a6cb85" stroke="#647a50" stroke-width="1.2" stroke-linejoin="round"/>
<polygon points="308.3,255.1 342.5,251.4 331.6,246.0 297.4,250.2" fill="#84e686" stroke="#4f8a51" stroke-width="1.2" stroke-linejoin="round"/>
<polygon points="116.0,188.2 129.3,193.2 115.6,185.4 102.2,183.8" fill="#e89388" stroke="#8b5851" stroke-width="1.2" stroke-linejoin="round"/>
<polygon points="394.8,257.6 422.6,252.1 414.4,243.8 386.6,249.1" fill="#84e785" stroke="#4f8b50" stroke-width="1.2" stroke-linejoin="round"/>
<polygon points="240.1,249.1 266.8,250.1 254.4,243.9 227.7,240.2" fill="#8be284" stroke="#54874f" stroke-width="1.2" stroke-linejoin="round"/>
<polygon points="106.2,190.9 116.0,188.2 102.2,183.8 92.5,186.7" fill="#ea9188" stroke="#8c5751" stroke-width="1.2" stroke-linejoin="round"/>
<polygon points="350.8,256.4 366.9,253.5 358.7,247.8 342.5,251.4" fill="#84e687" stroke="#4f8a51" stroke-width="1.2" stroke-linejoin="round"/>
<polygon points="97.9,198.0 106.2,190.9 92.5,186.7 84.1,191.7" fill="#e49687" stroke="#895a51" stroke-width="1.2" stroke-linejoin="round"/>
<polygon points="160.1,216.4 185.4,233.0 171.7,219.8 146.3,206.4" fill="#b8bb86" stroke="#6f7050" stroke-width="1.2" stroke-linejoin="round"/>
<polygon points="290.3,255.6 308.3,255.1 297.4,250.2 279.3,250.5" fill="#84e686" stroke="#4f8a50" stroke-width="1.2" stroke-linejoin="round"/>
<polygon points="90.9,205.4 97.9,198.0 84.1,191.7 77.1,196.9" fill="#dc9d87" stroke="#845e51" stroke-width="1.2" stroke-linejoin="round"/>
<polygon points="375.1,261.3 394.8,257.6 386.6,249.1 366.9,253.5" fill="#84e489" stroke="#4f8952" stroke-width="1.2" stroke-linejoin="round"/>
<polygon points="219.8,249.3 240.1,249.1 227.7,240.2 207.4,237.0" fill="#92dc85" stroke="#588450" stroke-width="1.2" stroke-linejoin="round"/>
<polygon points="316.6,259.3 350.8,256.4 342.5,251.4 308.3,255.1" fill="#84e588" stroke="#4f8952" stroke-width="1.2" stroke-linejoin="round"/>
<polygon points="277.7,255.7 290.3,255.6 279.3,250.5 266.8,250.1" fill="#84e884" stroke="#4f8b4f" stroke-width="1.2" stroke-linejoin="round"/>
<polygon points="401.7,267.5 429.5,262.1 422.6,252.1 394.8,257.6" fill="#85df8f" stroke="#508656" stroke-width="1.2" stroke-linejoin="round"/>
<polygon points="143.1,200.8 160.1,216.4 146.3,206.4 129.3,193.2" fill="#d3a487" stroke="#7f6351" stroke-width="1.2" stroke-linejoin="round"/>
<polygon points="359.0,263.3 375.1,261.3 366.9,253.5 350.8,256.4" fill="#85e28c" stroke="#508754" stroke-width="1.2" stroke-linejoin="round"/>
<polygon points="197.8,247.3 219.8,249.3 207.4,237.0 185.4,233.0" fill="#99d685" stroke="#5c8150" stroke-width="1.2" stroke-linejoin="round"/>
<polygon points="129.7,194.8 143.1,200.8 129.3,193.2 116.0,188.2" fill="#e59588" stroke="#8a5951" stroke-width="1.2" stroke-linejoin="round"/>
<polygon points="251.0,256.5 277.7,255.7 266.8,250.1 240.1,249.1" fill="#87e584" stroke="#518a4f" stroke-width="1.2" stroke-linejoin="round"/>
<polygon points="381.9,270.2 401.7,267.5 394.8,257.6 375.1,261.3" fill="#85dc92" stroke="#508458" stroke-width="1.2" stroke-linejoin="round"/>
<polygon points="298.5,259.9 316.6,259.3 308.3,255.1 290.3,255.6" fill="#84e587" stroke="#4f8a51" stroke-width="1.2" stroke-linejoin="round"/>
<polygon points="120.0,197.9 129.7,194.8 116.0,188.2 106.2,190.9" fill="#e99288" stroke="#8c5751" stroke-width="1.2" stroke-linejoin="round"/>
<polygon points="408.5,280.4 436.3,277.2 429.5,262.1 401.7,267.5" fill="#86d39d" stroke="#507e5e" stroke-width="1.2" stroke-linejoin="round"/>
<polygon points="324.8,264.6 359.0,263.3 350.8,256.4 316.6,259.3" fill="#85e28c" stroke="#508754" stroke-width="1.2" stroke-linejoin="round"/>
<polygon points="172.5,234.8 197.8,247.3 185.4,233.0 160.1,216.4" fill="#aac785" stroke="#667850" stroke-width="1.2" stroke-linejoin="round"/>
<polygon points="111.7,206.1 120.0,197.9 106.2,190.9 97.9,198.0" fill="#e29887" stroke="#885b51" stroke-width="1.2" stroke-linejoin="round"/>
<polygon points="286.0,260.2 298.5,259.9 290.3,255.6 277.7,255.7" fill="#84e786" stroke="#4f8a50" stroke-width="1.2" stroke-linejoin="round"/>
<polygon points="365.8,271.0 381.9,270.2 375.1,261.3 359.0,263.3" fill="#85db93" stroke="#508458" stroke-width="1.2" stroke-linejoin="round"/>
<polygon points="230.7,258.2 251.0,256.5 240.1,249.1 219.8,249.3" fill="#8ae384" stroke="#53884f" stroke-width="1.2" stroke-linejoin="round"/>
<polygon points="104.7,214.8 111.7,206.1 97.9,198.0 90.9,205.4" fill="#d7a187" stroke="#816151" stroke-width="1.2" stroke-linejoin="round"/>
<polygon points="388.8,281.4 408.5,280.4 401.7,267.5 381.9,270.2" fill="#86d19f" stroke="#507e5f" stroke-width="1.2" stroke-linejoin="round"/>
<polygon points="155.5,217.9 172.5,234.8 160.1,216.4 143.1,200.8" fill="#c6b086" stroke="#776951" stroke-width="1.2" stroke-linejoin="round"/>
<polygon points="415.3,295.6 443.1,294.6 436.3,277.2 408.5,280.4" fill="#87c2b1" stroke="#51756a" stroke-width="1.2" stroke-linejoin="round"/>
<polygon points="259.3,261.5 286.0,260.2 277.7,255.7 251.0,256.5" fill="#84e884" stroke="#4f8b4f" stroke-width="1.2" stroke-linejoin="round"/>
<polygon points="306.7,264.8 324.8,264.6 316.6,259.3 298.5,259.9" fill="#84e38a" stroke="#4f8853" stroke-width="1.2" stroke-linejoin="round"/>
<polygon points="208.8,258.8 230.7,258.2 219.8,249.3 197.8,247.3" fill="#8de084" stroke="#55874f" stroke-width="1.2" stroke-linejoin="round"/>
<polygon points="331.6,270.3 365.8,271.0 359.0,263.3 324.8,264.6" fill="#85dd91" stroke="#508557" stroke-width="1.2" stroke-linejoin="round"/>
<polygon points="372.7,280.7 388.8,281.4 381.9,270.2 365.8,271.0" fill="#86d29e" stroke="#507e5f" stroke-width="1.2" stroke-linejoin="round"/>
<polygon points="142.1,205.6 155.5,217.9 143.1,200.8 129.7,194.8" fill="#dc9d87" stroke="#845e51" stroke-width="1.2" stroke-linejoin="round"/>
<polygon points="294.2,264.9 306.7,264.8 298.5,259.9 286.0,260.2" fill="#84e588" stroke="#4f8952" stroke-width="1.2" stroke-linejoin="round"/>
<polygon points="395.6,294.6 415.3,295.6 408.5,280.4 388.8,281.4" fill="#87c4af" stroke="#517569" stroke-width="1.2" stroke-linejoin="round"/>
<polygon points="239.0,263.2 259.3,261.5 251.0,256.5 230.7,258.2" fill="#86e784" stroke="#508a4f" stroke-width="1.2" stroke-linejoin="round"/>
<polygon points="132.4,207.9 142.1,205.6 129.7,194.8 120.0,197.9" fill="#e39787" stroke="#885a51" stroke-width="1.2" stroke-linejoin="round"/>
<polygon points="420.8,308.1 448.6,307.9 443.1,294.6 415.3,295.6" fill="#89b2c4" stroke="#526b76" stroke-width="1.2" stroke-linejoin="round"/>
<polygon points="183.5,253.4 208.8,258.8 197.8,247.3 172.5,234.8" fill="#98d785" stroke="#5b8150" stroke-width="1.2" stroke-linejoin="round"/>
<polygon points="313.6,269.8 331.6,270.3 324.8,264.6 306.7,264.8" fill="#85e08d" stroke="#508755" stroke-width="1.2" stroke-linejoin="round"/>
<polygon points="124.1,215.9 132.4,207.9 120.0,197.9 111.7,206.1" fill="#dc9d87" stroke="#845e51" stroke-width="1.2" stroke-linejoin="round"/>
<polygon points="267.5,265.7 294.2,264.9 286.0,260.2 259.3,261.5" fill="#84e686" stroke="#4f8a50" stroke-width="1.2" stroke-linejoin="round"/>
<polygon points="338.5,277.3 372.7,280.7 365.8,271.0 331.6,270.3" fill="#85d799" stroke="#50815c" stroke-width="1.2" stroke-linejoin="round"/>
<polygon points="379.5,292.4 395.6,294.6 388.8,281.4 372.7,280.7" fill="#87c7ac" stroke="#517767" stroke-width="1.2" stroke-linejoin="round"/>
<polygon points="117.1,224.9 124.1,215.9 111.7,206.1 104.7,214.8" fill="#d0a787" stroke="#7d6451" stroke-width="1.2" stroke-linejoin="round"/>
<polygon points="217.0,264.2 239.0,263.2 230.7,258.2 208.8,258.8" fill="#87e684" stroke="#518a4f" stroke-width="1.2" stroke-linejoin="round"/>
<polygon points="166.5,245.9 183.5,253.4 172.5,234.8 155.5,217.9" fill="#acc685" stroke="#677750" stroke-width="1.2" stroke-linejoin="round"/>
<polygon points="301.1,269.5 313.6,269.8 306.7,264.8 294.2,264.9" fill="#85e28b" stroke="#508853" stroke-width="1.2" stroke-linejoin="round"/>
<polygon points="426.3,320.2 454.0,320.2 448.6,307.9 420.8,308.1" fill="#8aa4d5" stroke="#536380" stroke-width="1.2" stroke-linejoin="round"/>
<polygon points="401.1,306.2 420.8,308.1 415.3,295.6 395.6,294.6" fill="#88b6c0" stroke="#526d73" stroke-width="1.2" stroke-linejoin="round"/>
<polygon points="247.2,266.9 267.5,265.7 259.3,261.5 239.0,263.2" fill="#84e885" stroke="#4f8b50" stroke-width="1.2" stroke-linejoin="round"/>
<polygon points="320.4,276.2 338.5,277.3 331.6,270.3 313.6,269.8" fill="#85dc93" stroke="#508458" stroke-width="1.2" stroke-linejoin="round"/>
<polygon points="153.2,237.6 166.5,245.9 155.5,217.9 142.1,205.6" fill="#c0b486" stroke="#736c51" stroke-width="1.2" stroke-linejoin="round"/>
<polygon points="345.3,286.4 379.5,292.4 372.7,280.7 338.5,277.3" fill="#86cea3" stroke="#517c62" stroke-width="1.2" stroke-linejoin="round"/>
<polygon points="385.0,303.0 401.1,306.2 395.6,294.6 379.5,292.4" fill="#88baba" stroke="#527070" stroke-width="1.2" stroke-linejoin="round"/>
<polygon points="274.4,268.9 301.1,269.5 294.2,264.9 267.5,265.7" fill="#84e588" stroke="#4f8952" stroke-width="1.2" stroke-linejoin="round"/>
<polygon points="191.7,259.9 217.0,264.2 208.8,258.8 183.5,253.4" fill="#8de084" stroke="#55864f" stroke-width="1.2" stroke-linejoin="round"/>
<polygon points="431.7,331.1 459.5,330.2 454.0,320.2 426.3,320.2" fill="#8b98e3" stroke="#535b88" stroke-width="1.2" stroke-linejoin="round"/>
<polygon points="406.6,318.0 426.3,320.2 420.8,308.1 401.1,306.2" fill="#8aa9d0" stroke="#53657d" stroke-width="1.2" stroke-linejoin="round"/>
<polygon points="143.4,227.6 153.2,237.6 142.1,205.6 132.4,207.9" fill="#cda987" stroke="#7b6651" stroke-width="1.2" stroke-linejoin="round"/>
<polygon points="307.9,275.0 320.4,276.2 313.6,269.8 301.1,269.5" fill="#85df8f" stroke="#508656" stroke-width="1.2" stroke-linejoin="round"/>
<polygon points="225.3,267.9 247.2,266.9 239.0,263.2 217.0,264.2" fill="#85e784" stroke="#508b4f" stroke-width="1.2" stroke-linejoin="round"/>
<polygon points="135.1,227.0 143.4,227.6 132.4,207.9 124.1,215.9" fill="#cfa887" stroke="#7c6551" stroke-width="1.2" stroke-linejoin="round"/>
<polygon points="174.8,251.1 191.7,259.9 183.5,253.4 166.5,245.9" fill="#9bd485" stroke="#5d7f50" stroke-width="1.2" stroke-linejoin="round"/>
<polygon points="390.4,313.9 406.6,318.0 401.1,306.2 385.0,303.0" fill="#89aec9" stroke="#526978" stroke-width="1.2" stroke-linejoin="round"/>
<polygon points="128.1,235.1 135.1,227.0 124.1,215.9 117.1,224.9" fill="#c6af86" stroke="#776951" stroke-width="1.2" stroke-linejoin="round"/>
<polygon points="254.1,269.3 274.4,268.9 267.5,265.7 247.2,266.9" fill="#84e785" stroke="#4f8b50" stroke-width="1.2" stroke-linejoin="round"/>
<polygon points="327.3,284.5 345.3,286.4 338.5,277.3 320.4,276.2" fill="#86d59b" stroke="#50805d" stroke-width="1.2" stroke-linejoin="round"/>
<polygon points="350.8,296.1 385.0,303.0 379.5,292.4 345.3,286.4" fill="#87c3b0" stroke="#517569" stroke-width="1.2" stroke-linejoin="round"/>
<polygon points="435.8,338.4 463.6,336.3 459.5,330.2 431.7,331.1" fill="#8c90ee" stroke="#54568f" stroke-width="1.2" stroke-linejoin="round"/>
<polygon points="412.0,329.7 431.7,331.1 426.3,320.2 406.6,318.0" fill="#8b9cdf" stroke="#535e86" stroke-width="1.2" stroke-linejoin="round"/>
<polygon points="281.2,272.2 307.9,275.0 301.1,269.5 274.4,268.9" fill="#84e38a" stroke="#4f8853" stroke-width="1.2" stroke-linejoin="round"/>
<polygon points="200.0,264.9 225.3,267.9 217.0,264.2 191.7,259.9" fill="#8ae384" stroke="#53884f" stroke-width="1.2" stroke-linejoin="round"/>
<polygon points="161.4,240.4 174.8,251.1 166.5,245.9 153.2,237.6" fill="#abc785" stroke="#677750" stroke-width="1.2" stroke-linejoin="round"/>
<polygon points="314.8,282.1 327.3,284.5 320.4,276.2 307.9,275.0" fill="#85d996" stroke="#50825a" stroke-width="1.2" stroke-linejoin="round"/>
<polygon points="232.1,270.3 254.1,269.3 247.2,266.9 225.3,267.9" fill="#84e884" stroke="#4f8b4f" stroke-width="1.2" stroke-linejoin="round"/>
<polygon points="395.9,324.5 412.0,329.7 406.6,318.0 390.4,313.9" fill="#8aa2d7" stroke="#536181" stroke-width="1.2" stroke-linejoin="round"/>
<polygon points="151.7,234.2 161.4,240.4 153.2,237.6 143.4,227.6" fill="#bbb986" stroke="#706f50" stroke-width="1.2" stroke-linejoin="round"/>
<polygon points="356.3,308.0 390.4,313.9 385.0,303.0 350.8,296.1" fill="#88b8bd" stroke="#526e72" stroke-width="1.2" stroke-linejoin="round"/>
<polygon points="416.1,337.8 435.8,338.4 431.7,331.1 412.0,329.7" fill="#8b92eb" stroke="#54588d" stroke-width="1.2" stroke-linejoin="round"/>
<polygon points="332.8,293.1 350.8,296.1 345.3,286.4 327.3,284.5" fill="#86cca5" stroke="#517b63" stroke-width="1.2" stroke-linejoin="round"/>
<polygon points="261.0,271.3 281.2,272.2 274.4,268.9 254.1,269.3" fill="#84e785" stroke="#4f8a50" stroke-width="1.2" stroke-linejoin="round"/>
<polygon points="183.0,256.9 200.0,264.9 191.7,259.9 174.8,251.1" fill="#97d885" stroke="#5a8250" stroke-width="1.2" stroke-linejoin="round"/>
<polygon points="143.3,235.7 151.7,234.2 143.4,227.6 135.1,227.0" fill="#c2b386" stroke="#746b51" stroke-width="1.2" stroke-linejoin="round"/>
<polygon points="288.1,275.7 314.8,282.1 307.9,275.0 281.2,272.2" fill="#85e08e" stroke="#508655" stroke-width="1.2" stroke-linejoin="round"/>
<polygon points="136.4,242.5 143.3,235.7 135.1,227.0 128.1,235.1" fill="#bdb786" stroke="#716e50" stroke-width="1.2" stroke-linejoin="round"/>
<polygon points="320.3,289.2 332.8,293.1 327.3,284.5 314.8,282.1" fill="#86d29e" stroke="#507e5f" stroke-width="1.2" stroke-linejoin="round"/>
<polygon points="400.0,331.9 416.1,337.8 412.0,329.7 395.9,324.5" fill="#8b98e3" stroke="#535b88" stroke-width="1.2" stroke-linejoin="round"/>
<polygon points="206.9,270.3 232.1,270.3 225.3,267.9 200.0,264.9" fill="#88e484" stroke="#52894f" stroke-width="1.2" stroke-linejoin="round"/>
<polygon points="361.8,320.1 395.9,324.5 390.4,313.9 356.3,308.0" fill="#89accc" stroke="#52677a" stroke-width="1.2" stroke-linejoin="round"/>
<polygon points="169.7,247.1 183.0,256.9 174.8,251.1 161.4,240.4" fill="#a8c985" stroke="#657950" stroke-width="1.2" stroke-linejoin="round"/>
<polygon points="239.0,272.2 261.0,271.3 254.1,269.3 232.1,270.3" fill="#85e784" stroke="#508b4f" stroke-width="1.2" stroke-linejoin="round"/>
<polygon points="338.2,303.3 356.3,308.0 350.8,296.1 332.8,293.1" fill="#87c2b2" stroke="#51746b" stroke-width="1.2" stroke-linejoin="round"/>
<polygon points="267.8,273.0 288.1,275.7 281.2,272.2 261.0,271.3" fill="#84e785" stroke="#4f8a50" stroke-width="1.2" stroke-linejoin="round"/>
<polygon points="159.9,240.9 169.7,247.1 161.4,240.4 151.7,234.2" fill="#b7bd86" stroke="#6e7150" stroke-width="1.2" stroke-linejoin="round"/>
<polygon points="293.6,278.9 320.3,289.2 314.8,282.1 288.1,275.7" fill="#85dc92" stroke="#508458" stroke-width="1.2" stroke-linejoin="round"/>
<polygon points="189.9,266.9 206.9,270.3 200.0,264.9 183.0,256.9" fill="#91dd84" stroke="#57854f" stroke-width="1.2" stroke-linejoin="round"/>
<polygon points="325.7,297.3 338.2,303.3 332.8,293.1 320.3,289.2" fill="#87caa8" stroke="#517965" stroke-width="1.2" stroke-linejoin="round"/>
<polygon points="365.9,328.2 400.0,331.9 395.9,324.5 361.8,320.1" fill="#8aa2d8" stroke="#536182" stroke-width="1.2" stroke-linejoin="round"/>
<polygon points="151.6,243.5 159.9,240.9 151.7,234.2 143.3,235.7" fill="#bbb986" stroke="#706f50" stroke-width="1.2" stroke-linejoin="round"/>
<polygon points="213.7,275.0 239.0,272.2 232.1,270.3 206.9,270.3" fill="#87e684" stroke="#518a4f" stroke-width="1.2" stroke-linejoin="round"/>
<polygon points="343.7,313.9 361.8,320.1 356.3,308.0 338.2,303.3" fill="#88b6c0" stroke="#526d73" stroke-width="1.2" stroke-linejoin="round"/>
<polygon points="144.7,250.8 151.6,243.5 143.3,235.7 136.4,242.5" fill="#b5be86" stroke="#6d7250" stroke-width="1.2" stroke-linejoin="round"/>
<polygon points="245.9,273.3 267.8,273.0 261.0,271.3 239.0,272.2" fill="#87e684" stroke="#518a4f" stroke-width="1.2" stroke-linejoin="round"/>
<polygon points="176.6,262.5 189.9,266.9 183.0,256.9 169.7,247.1" fill="#9dd285" stroke="#5e7e50" stroke-width="1.2" stroke-linejoin="round"/>
<polygon points="273.3,274.6 293.6,278.9 288.1,275.7 267.8,273.0" fill="#84e786" stroke="#4f8a50" stroke-width="1.2" stroke-linejoin="round"/>
<polygon points="299.1,282.2 325.7,297.3 320.3,289.2 293.6,278.9" fill="#85d898" stroke="#50815b" stroke-width="1.2" stroke-linejoin="round"/>
<polygon points="331.2,306.3 343.7,313.9 338.2,303.3 325.7,297.3" fill="#87c0b4" stroke="#51736c" stroke-width="1.2" stroke-linejoin="round"/>
<polygon points="166.8,259.3 176.6,262.5 169.7,247.1 159.9,240.9" fill="#a8c985" stroke="#657950" stroke-width="1.2" stroke-linejoin="round"/>
<polygon points="347.8,321.1 365.9,328.2 361.8,320.1 343.7,313.9" fill="#89accc" stroke="#52677a" stroke-width="1.2" stroke-linejoin="round"/>
<polygon points="196.8,275.8 213.7,275.0 206.9,270.3 189.9,266.9" fill="#8ae384" stroke="#53884f" stroke-width="1.2" stroke-linejoin="round"/>
<polygon points="158.5,259.5 166.8,259.3 159.9,240.9 151.6,243.5" fill="#acc685" stroke="#677750" stroke-width="1.2" stroke-linejoin="round"/>
<polygon points="220.6,277.0 245.9,273.3 239.0,272.2 213.7,275.0" fill="#87e684" stroke="#518a4f" stroke-width="1.2" stroke-linejoin="round"/>
<polygon points="251.4,273.8 273.3,274.6 267.8,273.0 245.9,273.3" fill="#88e484" stroke="#52894f" stroke-width="1.2" stroke-linejoin="round"/>
<polygon points="151.6,262.2 158.5,259.5 151.6,243.5 144.7,250.8" fill="#a8c985" stroke="#657950" stroke-width="1.2" stroke-linejoin="round"/>
<polygon points="278.8,276.5 299.1,282.2 293.6,278.9 273.3,274.6" fill="#84e686" stroke="#4f8a51" stroke-width="1.2" stroke-linejoin="round"/>
<polygon points="304.6,285.9 331.2,306.3 325.7,297.3 299.1,282.2" fill="#86d29e" stroke="#507e5f" stroke-width="1.2" stroke-linejoin="round"/>
<polygon points="335.3,312.6 347.8,321.1 343.7,313.9 331.2,306.3" fill="#88b7be" stroke="#526e72" stroke-width="1.2" stroke-linejoin="round"/>
<polygon points="183.4,275.7 196.8,275.8 189.9,266.9 176.6,262.5" fill="#8fdf84" stroke="#56864f" stroke-width="1.2" stroke-linejoin="round"/>
<polygon points="173.7,273.3 183.4,275.7 176.6,262.5 166.8,259.3" fill="#94da85" stroke="#598350" stroke-width="1.2" stroke-linejoin="round"/>
<polygon points="203.7,279.8 220.6,277.0 213.7,275.0 196.8,275.8" fill="#86e684" stroke="#508a4f" stroke-width="1.2" stroke-linejoin="round"/>
<polygon points="308.7,289.5 335.3,312.6 331.2,306.3 304.6,285.9" fill="#86cda4" stroke="#517b62" stroke-width="1.2" stroke-linejoin="round"/>
<polygon points="226.1,277.5 251.4,273.8 245.9,273.3 220.6,277.0" fill="#89e484" stroke="#52894f" stroke-width="1.2" stroke-linejoin="round"/>
<polygon points="256.9,274.3 278.8,276.5 273.3,274.6 251.4,273.8" fill="#8ae384" stroke="#53884f" stroke-width="1.2" stroke-linejoin="round"/>
<polygon points="165.4,270.9 173.7,273.3 166.8,259.3 158.5,259.5" fill="#99d685" stroke="#5c8150" stroke-width="1.2" stroke-linejoin="round"/>
<polygon points="284.3,279.6 304.6,285.9 299.1,282.2 278.8,276.5" fill="#84e588" stroke="#4f8951" stroke-width="1.2" stroke-linejoin="round"/>
<polygon points="158.4,270.1 165.4,270.9 158.5,259.5 151.6,262.2" fill="#9ad585" stroke="#5c8050" stroke-width="1.2" stroke-linejoin="round"/>
<polygon points="190.3,280.3 203.7,279.8 196.8,275.8 183.4,275.7" fill="#86e684" stroke="#518a4f" stroke-width="1.2" stroke-linejoin="round"/>
<polygon points="209.2,281.1 226.1,277.5 220.6,277.0 203.7,279.8" fill="#86e684" stroke="#518a4f" stroke-width="1.2" stroke-linejoin="round"/>
<polygon points="180.6,278.8 190.3,280.3 183.4,275.7 173.7,273.3" fill="#89e384" stroke="#52884f" stroke-width="1.2" stroke-linejoin="round"/>
<polygon points="288.4,282.9 308.7,289.5 304.6,285.9 284.3,279.6" fill="#84e38a" stroke="#4f8853" stroke-width="1.2" stroke-linejoin="round"/>
<polygon points="231.6,277.6 256.9,274.3 251.4,273.8 226.1,277.5" fill="#8ce184" stroke="#54874f" stroke-width="1.2" stroke-linejoin="round"/>
<polygon points="262.4,275.5 284.3,279.6 278.8,276.5 256.9,274.3" fill="#8ae284" stroke="#53884f" stroke-width="1.2" stroke-linejoin="round"/>
<polygon points="172.3,276.9 180.6,278.8 173.7,273.3 165.4,270.9" fill="#8edf84" stroke="#55864f" stroke-width="1.2" stroke-linejoin="round"/>
<polygon points="195.8,282.6 209.2,281.1 203.7,279.8 190.3,280.3" fill="#85e784" stroke="#508b4f" stroke-width="1.2" stroke-linejoin="round"/>
<polygon points="165.3,275.7 172.3,276.9 165.4,270.9 158.4,270.1" fill="#92dc84" stroke="#57844f" stroke-width="1.2" stroke-linejoin="round"/>
<polygon points="266.5,277.5 288.4,282.9 284.3,279.6 262.4,275.5" fill="#8ae384" stroke="#53884f" stroke-width="1.2" stroke-linejoin="round"/>
<polygon points="214.7,282.3 231.6,277.6 226.1,277.5 209.2,281.1" fill="#89e484" stroke="#52894f" stroke-width="1.2" stroke-linejoin="round"/>
<polygon points="237.1,278.2 262.4,275.5 256.9,274.3 231.6,277.6" fill="#8ee084" stroke="#55864f" stroke-width="1.2" stroke-linejoin="round"/>
<polygon points="186.1,282.0 195.8,282.6 190.3,280.3 180.6,278.8" fill="#87e584" stroke="#518a4f" stroke-width="1.2" stroke-linejoin="round"/>
<polygon points="177.8,280.5 186.1,282.0 180.6,278.8 172.3,276.9" fill="#8ae384" stroke="#53884f" stroke-width="1.2" stroke-linejoin="round"/>
<polygon points="201.3,285.4 214.7,282.3 209.2,281.1 195.8,282.6" fill="#85e784" stroke="#508a4f" stroke-width="1.2" stroke-linejoin="round"/>
<polygon points="170.8,279.2 177.8,280.5 172.3,276.9 165.3,275.7" fill="#8ee084" stroke="#55864f" stroke-width="1.2" stroke-linejoin="round"/>
<polygon points="241.2,279.6 266.5,277.5 262.4,275.5 237.1,278.2" fill="#8fdf84" stroke="#56864f" stroke-width="1.2" stroke-linejoin="round"/>
<polygon points="220.2,283.7 237.1,278.2 231.6,277.6 214.7,282.3" fill="#8ae284" stroke="#53884f" stroke-width="1.2" stroke-linejoin="round"/>
<polygon points="191.6,285.9 201.3,285.4 195.8,282.6 186.1,282.0" fill="#85e784" stroke="#508a4f" stroke-width="1.2" stroke-linejoin="round"/>
<polygon points="183.3,284.7 191.6,285.9 186.1,282.0 177.8,280.5" fill="#88e584" stroke="#51894f" stroke-width="1.2" stroke-linejoin="round"/>
<polygon points="206.9,288.9 220.2,283.7 214.7,282.3 201.3,285.4" fill="#85e784" stroke="#508b4f" stroke-width="1.2" stroke-linejoin="round"/>
<polygon points="176.4,283.3 183.3,284.7 177.8,280.5 170.8,279.2" fill="#8be284" stroke="#53884f" stroke-width="1.2" stroke-linejoin="round"/>
<polygon points="224.3,285.4 241.2,279.6 237.1,278.2 220.2,283.7" fill="#8be284" stroke="#54874f" stroke-width="1.2" stroke-linejoin="round"/>
<polygon points="197.1,290.8 206.9,288.9 201.3,285.4 191.6,285.9" fill="#84e785" stroke="#4f8b50" stroke-width="1.2" stroke-linejoin="round"/>
<polygon points="188.8,289.8 197.1,290.8 191.6,285.9 183.3,284.7" fill="#84e884" stroke="#4f8b4f" stroke-width="1.2" stroke-linejoin="round"/>
<polygon points="211.0,291.5 224.3,285.4 220.2,283.7 206.9,288.9" fill="#84e884" stroke="#4f8b4f" stroke-width="1.2" stroke-linejoin="round"/>
<polygon points="181.9,287.4 188.8,289.8 183.3,284.7 176.4,283.3" fill="#87e584" stroke="#518a4f" stroke-width="1.2" stroke-linejoin="round"/>
<polygon points="201.3,294.4 211.0,291.5 206.9,288.9 197.1,290.8" fill="#84e488" stroke="#4f8952" stroke-width="1.2" stroke-linejoin="round"/>
<polygon points="192.9,293.9 201.3,294.4 197.1,290.8 188.8,289.8" fill="#84e488" stroke="#4f8952" stroke-width="1.2" stroke-linejoin="round"/>
<polygon points="186.0,290.2 192.9,293.9 188.8,289.8 181.9,287.4" fill="#84e884" stroke="#4f8b4f" stroke-width="1.2" stroke-linejoin="round"/><line x1="186.0" y1="290.2" x2="186.0" y2="377.0" stroke="#c83a4a" stroke-width="1.4"/><ellipse cx="186.0" cy="377.0" rx="6" ry="2.5" stroke="#7a1828" fill="none" stroke-width="1.3"/><rect x="182.5" y="286.7" width="7.5" height="7.5" fill="#ee1010"/><rect x="178.0" y="265.2" width="17" height="12" fill="#4a4a20"/><text x="186.5" y="275.4" fill="#f0d040" font-family="Liberation Sans" font-weight="700" font-size="11" text-anchor="middle">39</text></g></svg>
    <div class="txt" style="left:5px;top:2px">rpm: 900<br>fuelload: 1.0<br>Selected %: 39</div>
  </div>
  <div class="vtrack" style="left:6px;top:103px;height:313px"><div class="vfill" style="height:160px"></div></div>
  <svg class="abs" style="left:0px;top:243px" width="16" height="15"><path d="M0.5,1 L10,1 L15.5,7 L10,13.5 L0.5,13.5 Z" fill="#f4f6f9" stroke="#2c2c2c" stroke-width="1"/></svg>
  <div class="vtrack" style="left:506px;top:212px;height:94px"><div class="vfill" style="height:36px"></div></div>
  <svg class="abs" style="left:502px;top:257px" width="14" height="15"><path d="M0.5,1 L9,1 L13.5,7 L9,13.5 L0.5,13.5 Z" fill="#f4f6f9" stroke="#2c2c2c" stroke-width="1"/></svg>
  <div class="htrack" style="left:7.5px;top:428px;width:500px"><div class="hfill" style="width:284px"></div></div>
  <svg class="abs" style="left:289px;top:422px" width="15" height="17"><path d="M1,0.5 L1,9.5 L7,15.5 L13,9.5 L13,0.5" fill="#f4f6f9" stroke="#2c2c2c" stroke-width="1"/></svg>
  <div class="btnd" style="left:179px;top:443px;width:81px;height:31px"><svg class="abs" style="left:28px;top:4px" width="24" height="23"><path d="M2,8 L9,8 Q17,8 17,15 L17.5,21" stroke="#c6c6c6" stroke-width="7" fill="none"/><path d="M1,2 L7,2 L9,13 L2,13 Z" fill="#c2c2c2"/></svg></div>
  <div class="btnd" style="left:263px;top:443px;width:81px;height:31px"><svg class="abs" style="left:29px;top:4px" width="24" height="23"><path d="M22,8 L15,8 Q7,8 7,15 L6.5,21" stroke="#c6c6c6" stroke-width="7" fill="none"/><path d="M23,2 L17,2 L15,13 L22,13 Z" fill="#c2c2c2"/></svg></div>
  <div class="btn" style="left:346px;top:443px;width:81px;height:31px"><svg class="abs" style="left:17px;top:6px" width="19" height="19"><circle cx="9.5" cy="9.5" r="8.7" fill="#5c5c5c"/><path d="M9.5,3.5 C8,6 6,7.5 6,11 C6,13.5 7.8,15 9.5,15 C11.5,15 13,13.5 13,11 C13,8.8 11.5,8 11.8,6 C10.6,7 10.6,8.5 10.2,9.3 C9.6,7.8 10.4,5.5 9.5,3.5 Z" fill="#ffffff"/></svg><span class="abs" style="left:41px;top:8px"><span class="u">B</span>urn</span></div>
  <div class="btn" style="left:430px;top:443px;width:81px;height:31px"><span class="abs" style="left:25px;top:8px;width:32px;text-align:left"><span class="u">C</span>lose</span></div>
</div>

</body></html>
